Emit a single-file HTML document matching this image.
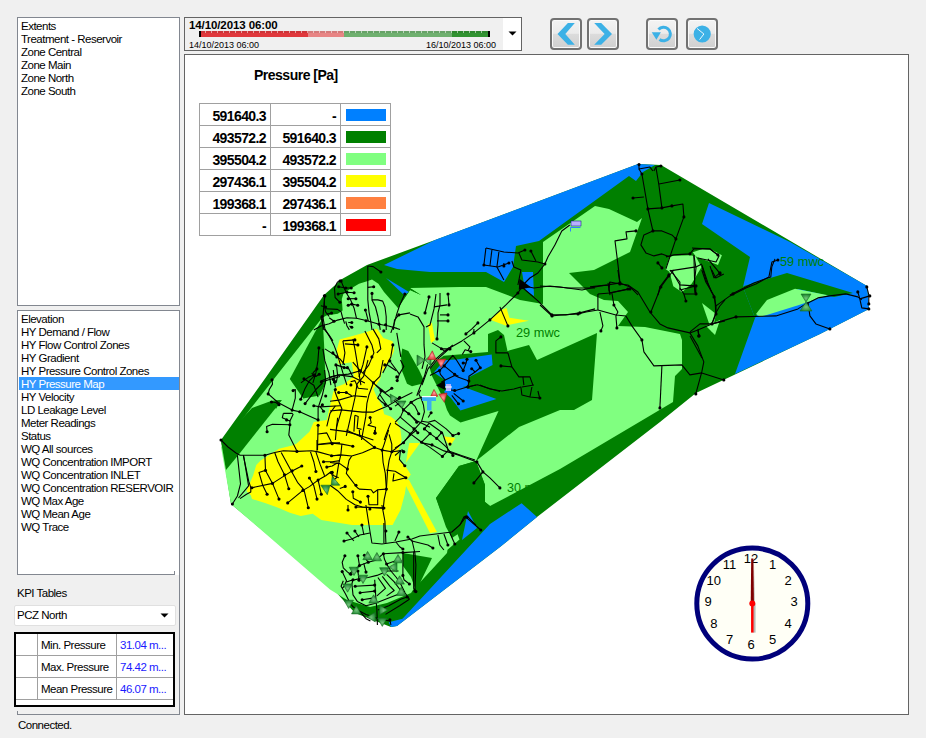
<!DOCTYPE html>
<html><head><meta charset="utf-8">
<style>
*{margin:0;padding:0;box-sizing:border-box}
html,body{width:926px;height:738px;overflow:hidden;background:#f0f0f0;font-family:"Liberation Sans",sans-serif;font-size:11px;color:#000}
.abs{position:absolute}
.lb{position:absolute;background:#fff;border:1px solid #828790}
.it{position:absolute;left:3px;height:13px;line-height:14px;white-space:nowrap;letter-spacing:-0.5px;font-size:11.5px}
.sel{background:#3399ff;color:#fff}
.btn{position:absolute;top:18px;width:32px;height:32px;border:2px solid #727272;border-radius:4px;background:linear-gradient(#f3f3f3 0,#ebebeb 48%,#dcdcdc 49%,#d0d0d0 100%);box-shadow:inset 0 0 0 1px #fafafa}
.btn svg{position:absolute;left:0;top:0}
.t{position:absolute;white-space:nowrap}
</style></head><body>
<!-- listbox 1 -->
<div class="lb" style="left:17px;top:17px;width:163px;height:289px">
 <div class="it" style="top:1px">Extents</div>
 <div class="it" style="top:14px">Treatment - Reservoir</div>
 <div class="it" style="top:27px">Zone Central</div>
 <div class="it" style="top:40px">Zone Main</div>
 <div class="it" style="top:53px">Zone North</div>
 <div class="it" style="top:66px">Zone South</div>
</div>
<!-- listbox 2 -->
<div class="lb" style="left:17px;top:310px;width:163px;height:265px;border-bottom:none">
 <div class="it" style="top:1px">Elevation</div>
 <div class="it" style="top:14px">HY Demand / Flow</div>
 <div class="it" style="top:27px">HY Flow Control Zones</div>
 <div class="it" style="top:40px">HY Gradient</div>
 <div class="it" style="top:53px">HY Pressure Control Zones</div>
 <div class="it sel" style="top:66px;left:1px;width:160px;padding-left:2px">HY Pressure Map</div>
 <div class="it" style="top:79px">HY Velocity</div>
 <div class="it" style="top:92px">LD Leakage Level</div>
 <div class="it" style="top:105px">Meter Readings</div>
 <div class="it" style="top:118px">Status</div>
 <div class="it" style="top:131px">WQ All sources</div>
 <div class="it" style="top:144px">WQ Concentration IMPORT</div>
 <div class="it" style="top:157px">WQ Concentration INLET</div>
 <div class="it" style="top:170px">WQ Concentration RESERVOIR</div>
 <div class="it" style="top:183px">WQ Max Age</div>
 <div class="it" style="top:196px">WQ Mean Age</div>
 <div class="it" style="top:209px">WQ Trace</div>
</div>
<div class="abs" style="left:17px;top:574px;width:158px;height:1px;background:#828790"></div>
<div class="abs" style="left:174px;top:571px;width:1px;height:4px;background:#828790"></div>
<div class="abs" style="left:179px;top:574px;width:1px;height:141px;background:#828790"></div>
<div class="abs" style="left:17px;top:714px;width:163px;height:1px;background:#828790"></div>
<div class="abs" style="left:17px;top:711px;width:1px;height:4px;background:#828790"></div>
<div class="t" style="left:17px;top:587px;letter-spacing:-0.5px;font-size:11.5px">KPI Tables</div>
<!-- combo -->
<div class="abs" style="left:14px;top:605px;width:162px;height:21px;background:#fff;border:1px solid #e0e0e0;border-radius:2px"></div>
<div class="t" style="left:17px;top:608.5px;letter-spacing:-0.5px;font-size:11.5px">PCZ North</div>
<svg class="abs" style="left:160px;top:613px" width="10" height="6"><path d="M0.5 0.5h8l-4 4z" fill="#000"/></svg>
<!-- kpi table -->
<div class="abs" style="left:14px;top:632px;width:161px;height:75px;border:2px solid #000;background:#fff"></div>
<div class="abs" style="left:16px;top:655px;width:157px;height:1px;background:#a0a0a0"></div>
<div class="abs" style="left:16px;top:677px;width:157px;height:1px;background:#a0a0a0"></div>
<div class="abs" style="left:16px;top:699px;width:157px;height:1px;background:#a0a0a0"></div>
<div class="abs" style="left:37px;top:634px;width:1px;height:66px;background:#a0a0a0"></div>
<div class="abs" style="left:116px;top:634px;width:1px;height:66px;background:#a0a0a0"></div>
<div class="t" style="left:41px;top:639px;letter-spacing:-0.5px;font-size:11.5px">Min. Pressure</div>
<div class="t" style="left:41px;top:661px;letter-spacing:-0.5px;font-size:11.5px">Max. Pressure</div>
<div class="t" style="left:41px;top:683px;letter-spacing:-0.5px;font-size:11.5px">Mean Pressure</div>
<div class="t" style="left:120px;top:639px;letter-spacing:-0.5px;font-size:11.5px;color:#1a1aff">31.04 m...</div>
<div class="t" style="left:120px;top:661px;letter-spacing:-0.5px;font-size:11.5px;color:#1a1aff">74.42 m...</div>
<div class="t" style="left:120px;top:683px;letter-spacing:-0.5px;font-size:11.5px;color:#1a1aff">46.07 m...</div>
<div class="t" style="left:18px;top:718.5px;letter-spacing:-0.5px;font-size:11.5px">Connected.</div>

<!-- time slider -->
<div class="abs" style="left:184px;top:17px;width:338px;height:34px;border:1px solid #646464;background:#f0f0f0"></div>
<div class="abs" style="left:503px;top:18px;width:18px;height:32px;background:#fff"></div>
<svg class="abs" style="left:508px;top:31px" width="10" height="6"><path d="M0.5 0.5h8l-4 4z" fill="#000"/></svg>
<div class="t" style="left:189px;top:19px;font-weight:bold;font-size:11.5px;letter-spacing:-0.1px">14/10/2013 06:00</div>
<div class="t" style="left:189px;top:39.5px;font-size:9px">14/10/2013 06:00</div>
<div class="t" style="left:426px;top:39.5px;font-size:9px">16/10/2013 06:00</div>
<svg class="abs" style="left:199px;top:31px" width="291" height="6">
 <rect x="0" y="0" width="2" height="6" fill="#000"/>
 <rect x="2" y="0" width="107" height="6" fill="#e0383c"/>
 <rect x="109" y="0" width="36" height="6" fill="#e88585"/>
 <rect x="145" y="0" width="108" height="6" fill="#6fb06f"/>
 <rect x="253" y="0" width="36" height="6" fill="#319331"/>
 <rect x="289" y="0" width="2" height="6" fill="#000"/>
 <rect x="2" y="0" width="287" height="2" fill="#000" opacity="0.08"/>
<rect x="6" y="0" width="1" height="2" fill="#fff" opacity="0.55"/><rect x="12" y="0" width="1" height="2" fill="#fff" opacity="0.55"/><rect x="18" y="0" width="1" height="2" fill="#fff" opacity="0.55"/><rect x="24" y="0" width="1" height="2" fill="#fff" opacity="0.55"/><rect x="30" y="0" width="1" height="2" fill="#fff" opacity="0.55"/><rect x="36" y="0" width="1" height="2" fill="#fff" opacity="0.55"/><rect x="42" y="0" width="1" height="2" fill="#fff" opacity="0.55"/><rect x="48" y="0" width="1" height="2" fill="#fff" opacity="0.55"/><rect x="54" y="0" width="1" height="2" fill="#fff" opacity="0.55"/><rect x="60" y="0" width="1" height="2" fill="#fff" opacity="0.55"/><rect x="66" y="0" width="1" height="2" fill="#fff" opacity="0.55"/><rect x="72" y="0" width="1" height="2" fill="#fff" opacity="0.55"/><rect x="78" y="0" width="1" height="2" fill="#fff" opacity="0.55"/><rect x="84" y="0" width="1" height="2" fill="#fff" opacity="0.55"/><rect x="90" y="0" width="1" height="2" fill="#fff" opacity="0.55"/><rect x="96" y="0" width="1" height="2" fill="#fff" opacity="0.55"/><rect x="102" y="0" width="1" height="2" fill="#fff" opacity="0.55"/><rect x="108" y="0" width="1" height="2" fill="#fff" opacity="0.55"/><rect x="114" y="0" width="1" height="2" fill="#fff" opacity="0.55"/><rect x="120" y="0" width="1" height="2" fill="#fff" opacity="0.55"/><rect x="126" y="0" width="1" height="2" fill="#fff" opacity="0.55"/><rect x="132" y="0" width="1" height="2" fill="#fff" opacity="0.55"/><rect x="138" y="0" width="1" height="2" fill="#fff" opacity="0.55"/><rect x="144" y="0" width="1" height="2" fill="#fff" opacity="0.55"/><rect x="150" y="0" width="1" height="2" fill="#fff" opacity="0.55"/><rect x="156" y="0" width="1" height="2" fill="#fff" opacity="0.55"/><rect x="162" y="0" width="1" height="2" fill="#fff" opacity="0.55"/><rect x="168" y="0" width="1" height="2" fill="#fff" opacity="0.55"/><rect x="174" y="0" width="1" height="2" fill="#fff" opacity="0.55"/><rect x="180" y="0" width="1" height="2" fill="#fff" opacity="0.55"/><rect x="186" y="0" width="1" height="2" fill="#fff" opacity="0.55"/><rect x="192" y="0" width="1" height="2" fill="#fff" opacity="0.55"/><rect x="198" y="0" width="1" height="2" fill="#fff" opacity="0.55"/><rect x="204" y="0" width="1" height="2" fill="#fff" opacity="0.55"/><rect x="210" y="0" width="1" height="2" fill="#fff" opacity="0.55"/><rect x="216" y="0" width="1" height="2" fill="#fff" opacity="0.55"/><rect x="222" y="0" width="1" height="2" fill="#fff" opacity="0.55"/><rect x="228" y="0" width="1" height="2" fill="#fff" opacity="0.55"/><rect x="234" y="0" width="1" height="2" fill="#fff" opacity="0.55"/><rect x="240" y="0" width="1" height="2" fill="#fff" opacity="0.55"/><rect x="246" y="0" width="1" height="2" fill="#fff" opacity="0.55"/><rect x="252" y="0" width="1" height="2" fill="#fff" opacity="0.55"/><rect x="258" y="0" width="1" height="2" fill="#fff" opacity="0.55"/><rect x="264" y="0" width="1" height="2" fill="#fff" opacity="0.55"/><rect x="270" y="0" width="1" height="2" fill="#fff" opacity="0.55"/><rect x="276" y="0" width="1" height="2" fill="#fff" opacity="0.55"/><rect x="282" y="0" width="1" height="2" fill="#fff" opacity="0.55"/>
</svg>

<!-- buttons -->
<div class="btn" style="left:550px"><svg width="28" height="28"><path d="M22.8 3 L15.9 3 L5.5 14 L15.9 24.8 L22.8 24.8 L13.3 14Z" fill="#3cb1e6"/></svg></div>
<div class="btn" style="left:587px"><svg width="28" height="28"><path d="M5.2 3 L12.2 3 L23 14 L12.2 24.8 L5.2 24.8 L15.6 14Z" fill="#3cb1e6"/></svg></div>
<div class="btn" style="left:646px"><svg width="28" height="28"><path d="M10.5 9.5 A6.8 6.8 0 1 1 11.5 19.5" fill="none" stroke="#3cb1e6" stroke-width="3"/><path d="M3.7 12.3 L12.9 12.3 L8.4 19.8Z" fill="#3cb1e6"/></svg></div>
<div class="btn" style="left:686px"><svg width="28" height="28"><circle cx="14.2" cy="14" r="8.6" fill="#3cb1e6"/><path d="M9 8.4 L15.9 14 L11.6 19.6" fill="none" stroke="#fff" stroke-width="0.9"/></svg></div>

<!-- map panel -->
<div class="abs" style="left:184px;top:54px;width:725px;height:661px;border:1px solid #646464;background:#fff;overflow:hidden">
<svg class="abs" style="left:-185px;top:-55px" width="926" height="738" id="map">
<polygon points="638,164 661,165 867,286 869,309 820,334 696,393 660,422 537,517 500,547 397,626 391,627 355,613 334,590 231,504 221,440 264,380 324,295 342,279 367,265 435,240" fill="#008000"/>
<polygon points="221,447 251,408 322,318 326.4,315.4 337.8,313.8 342.6,310.5 341.8,299 343.5,293.5 351,288.6 359,283.7 367,281.3 372,279.6 378.4,283.7 384,292 398,308 410,290 421,295 410,288 460,287 486,287 502,293 520,300 543,304 543,242 595,206 609,209 637,222 642,218 630,252 594,270 569,273 590,294 597,297 604,300 618,301 628,312 618,326 645,327 680,334 682,340 682,369 675,376 673,402 641,421 560,469 490,506 485,502 485,485 476,461 459,466 436,498 440.5,510 454.4,525.5 459.5,539.4 447.5,549.7 447,553 413,590 411,593 387,603 370,607 347,600 330,589.5 231,504" fill="#80ff80"/>
<polygon points="221,441 252,408 271,401 282,400 240,453 226,470" fill="#008000"/>
<polygon points="322.6,317.9 289.8,379 303.2,398.4 319.6,395.4 325.6,383.5 324.1,344.7" fill="#008000"/>
<polygon points="384,276 398,308 410,290 421,295 408,287" fill="#008000"/>
<polygon points="488,334 498,330 504,335 507.5,351 529,345 537,360 597,333 592,400 574,410 560,410 519,427 476,461 498.5,411 460.5,422.5 450,415.5 447,410 443,398 432,376 430,369 438.8,359.4 443.7,355.7 488,352" fill="#008000"/>
<polygon points="402.2,348.4 408.3,350.9 419.3,370.4 424.1,381.3 421.7,383.8 412,386.2 407,383.8 402.2,371.6 401,357" fill="#008000"/>
<polygon points="436,498 459,466 476,461 485,485 485,502 490,506 464,530 452,538 446,527" fill="#008000"/>
<polygon points="403,553 432,558 416,591.5 411,577 403,566" fill="#008000"/>
<polygon points="272,401 281,400 276,409" fill="#008000"/>
<polygon points="673.3,255.7 689.8,255.2 695.6,256.2 701.5,267 691.8,283.5 682,292.2 673.3,286.3 669.4,271.8 665.5,268.9 669.4,257.2" fill="#80ff80"/>
<polygon points="692.8,252.3 702.5,249 711.2,249.4 721.9,255.2 718,265 710.3,262 699.6,258.2 695.6,256.2" fill="#80ff80"/>
<polygon points="702,303 716,314 712,332" fill="#80ff80"/>
<polygon points="706,326 715,335 720,320" fill="#80ff80"/>
<polygon points="384,265 435,240 638,164 655,165 643,172 636,181 629,176 539,241 516,246 513,267 504,282 486,272 430,272 397,269" fill="#0080ff"/>
<polygon points="386,278 404,295 409,292" fill="#0080ff"/>
<polygon points="468,511 477,528 462,540" fill="#0080ff"/>
<polygon points="522,272 533,272 534,296 525,290" fill="#0080ff"/>
<polygon points="709,203 790,242 867,286 869,309 820,334 735,374 755,318 743,287 750,257 702,224" fill="#0080ff"/>
<polygon points="537,517 500,547 397,626 391,627 388.7,622.3 402.5,618.8 490,524 521.6,503.2" fill="#0080ff"/>
<polygon points="433.8,372.5 444.2,360.2 458.5,359.2 491.7,354.5 492.6,364.9 468.9,377.3 464.2,384.8 449,382 442.3,378.2" fill="#0080ff"/>
<polygon points="447,387.7 463.2,386.7 496.4,399.1 460.4,410.5 450.9,398.1 444,392" fill="#0080ff"/>
<polygon points="444.2,378.2 468.9,377.3 468,385.8 447,390.5 444.2,384.8" fill="#0080ff"/>
<polygon points="744,286 787,273 853,293 834,297 798,289 759,312 755,318 743,287" fill="#008000"/>
<polygon points="756,314 767,300 795,288.7 828,295.3 799,305 760,317" fill="#80ff80"/>
<polygon points="339.7,339.6 361.5,333.4 377,328.7 383.3,338 392.6,341.2 394.2,350.5 389.5,361.4 382.1,371.9 379.9,379.5 373.4,389.3 377.7,399 382.1,405.6 384.2,414.2 390.7,416.4 397.2,421.8 400.5,430 401.6,439.8 398.3,451.7 399.4,460.4 405.9,466.9 410.8,474.5 407,479.9 404.8,494 400.5,510 392.6,525 352.1,525 321.3,520 312.7,513.8 300.7,516 289.9,512.7 276.9,507.2 265,502.9 252,499 250.8,495.3 246.5,491 253,475.8 256.3,465 260.6,460.6 272.5,453 279,448.7 292,445.4 296.4,443.8 309.4,431.8 313.8,422 326.8,419.9 333.3,391.7 336.5,387.1 344.1,383.9 353.9,376.3 351.7,362.2 338.7,364.3 336.6,350.5" fill="#ffff00"/>
<polygon points="409.2,443 420,443 406,462.5" fill="#ffff00"/>
<polygon points="443.2,436.3 455.3,438 450,446.6" fill="#ffff00"/>
<polygon points="428,324 432,323 435,340 431,343" fill="#ffff00"/>
<polygon points="403,480 409,480 437,532 430,533" fill="#ffff00"/>
<polygon points="490,319.7 501.6,310 506.5,308 509.4,317.8 528.9,320.7 505.5,325.6" fill="#ffff00"/>
<polyline points="324.9,295.9 323.9,304.9 322.9,316.9 324.9,328.9 330.9,338.9 333.9,344.9 336.9,352.9 339.9,362.9 342.9,372.9 346.9,385.1" fill="none" stroke="#000" stroke-width="1.1" stroke-linejoin="round"/>
<polyline points="320.9,316.9 323.9,328.9 328.9,334.9 332.9,340.9" fill="none" stroke="#000" stroke-width="1.1" stroke-linejoin="round"/>
<polyline points="322.9,348.9 324.9,360.9 328.9,372.9 330.9,385.1" fill="none" stroke="#000" stroke-width="1.1" stroke-linejoin="round"/>
<polyline points="318.9,347.9 317.9,360.9 315.9,372.9 312.9,382.9" fill="none" stroke="#000" stroke-width="1.1" stroke-linejoin="round"/>
<polyline points="342.9,340.9 344.9,352.9 342.9,364.9" fill="none" stroke="#000" stroke-width="1.1" stroke-linejoin="round"/>
<polyline points="342.9,340.9 354.9,339.9" fill="none" stroke="#000" stroke-width="1.1" stroke-linejoin="round"/>
<polyline points="344.9,343.9 357.9,344.9" fill="none" stroke="#000" stroke-width="1.1" stroke-linejoin="round"/>
<polyline points="352.9,338.9 354.9,348.9 356.9,360.9 358.9,372.9 360.9,385.1" fill="none" stroke="#000" stroke-width="1.1" stroke-linejoin="round"/>
<polyline points="364.9,330.9 371.9,344.9 373.9,352.9 368.9,364.9 362.9,372.9" fill="none" stroke="#000" stroke-width="1.1" stroke-linejoin="round"/>
<polyline points="372.9,328.9 378.8,338.9 380.8,348.9 376.8,352.9" fill="none" stroke="#000" stroke-width="1.1" stroke-linejoin="round"/>
<polyline points="366.9,346.9 362.9,364.9 358.9,376.9" fill="none" stroke="#000" stroke-width="1.1" stroke-linejoin="round"/>
<polyline points="392.8,344.9 390.8,356.9 386.8,364.9 382.8,372.9" fill="none" stroke="#000" stroke-width="1.1" stroke-linejoin="round"/>
<polyline points="396.8,332.9 398.8,344.9 400.8,356.9" fill="none" stroke="#000" stroke-width="1.1" stroke-linejoin="round"/>
<polyline points="324.9,348.9 332.9,353.9 339.9,358.9 344.9,364.9" fill="none" stroke="#000" stroke-width="1.1" stroke-linejoin="round"/>
<polyline points="332.9,352.9 336.9,356.9" fill="none" stroke="#000" stroke-width="1.1" stroke-linejoin="round"/>
<polyline points="335.9,364.9 348.9,368.9 352.9,376.9" fill="none" stroke="#000" stroke-width="1.1" stroke-linejoin="round"/>
<polyline points="320.9,380.9 330.9,376.9 338.9,374.9 352.9,376.9 364.9,382.9" fill="none" stroke="#000" stroke-width="1.1" stroke-linejoin="round"/>
<polyline points="300.9,382.9 308.9,376.9 313.9,374.9" fill="none" stroke="#000" stroke-width="1.1" stroke-linejoin="round"/>
<polyline points="312.9,372.9 316.9,368.9" fill="none" stroke="#000" stroke-width="1.1" stroke-linejoin="round"/>
<polyline points="404.8,294.0 399.8,304.9 396.8,313.9 393.8,324.9 390.8,332.9" fill="none" stroke="#000" stroke-width="1.1" stroke-linejoin="round"/>
<polyline points="398.8,314.9 410.0,312.9" fill="none" stroke="#000" stroke-width="1.1" stroke-linejoin="round"/>
<circle cx="324.9" cy="295.9" r="1.55" fill="#000"/>
<circle cx="318.9" cy="347.9" r="1.55" fill="#000"/>
<circle cx="354.9" cy="339.9" r="1.55" fill="#000"/>
<circle cx="357.9" cy="344.9" r="1.55" fill="#000"/>
<circle cx="366.9" cy="346.9" r="1.55" fill="#000"/>
<circle cx="392.8" cy="344.9" r="1.55" fill="#000"/>
<circle cx="332.9" cy="352.9" r="1.55" fill="#000"/>
<circle cx="336.9" cy="356.9" r="1.55" fill="#000"/>
<circle cx="335.9" cy="364.9" r="1.55" fill="#000"/>
<circle cx="313.9" cy="374.9" r="1.55" fill="#000"/>
<circle cx="316.9" cy="368.9" r="1.55" fill="#000"/>
<circle cx="404.8" cy="294.0" r="1.55" fill="#000"/>
<circle cx="339.9" cy="281.0" r="1.55" fill="#000"/>
<circle cx="383.8" cy="330.9" r="1.55" fill="#000"/>
<circle cx="398.8" cy="314.9" r="1.55" fill="#000"/>
<circle cx="371.9" cy="356.9" r="1.55" fill="#000"/>
<circle cx="389.8" cy="360.9" r="1.55" fill="#000"/>
<circle cx="384.8" cy="364.9" r="1.55" fill="#000"/>
<circle cx="396.8" cy="376.9" r="1.55" fill="#000"/>
<circle cx="350.9" cy="384.9" r="1.55" fill="#000"/>
<polyline points="485.9,248.0 483.9,265.0" fill="none" stroke="#000" stroke-width="1.1" stroke-linejoin="round"/>
<polyline points="485.9,248.0 503.9,252.0 517.9,253.0 524.9,250.0" fill="none" stroke="#000" stroke-width="1.1" stroke-linejoin="round"/>
<polyline points="491.9,250.0 489.9,266.0" fill="none" stroke="#000" stroke-width="1.1" stroke-linejoin="round"/>
<polyline points="498.9,252.0 496.9,267.0 503.9,280.0" fill="none" stroke="#000" stroke-width="1.1" stroke-linejoin="round"/>
<polyline points="483.9,265.0 497.9,267.0 508.9,263.0" fill="none" stroke="#000" stroke-width="1.1" stroke-linejoin="round"/>
<polyline points="503.9,263.0 503.9,266.0" fill="none" stroke="#000" stroke-width="1.1" stroke-linejoin="round"/>
<polyline points="518.9,253.0 521.9,260.0 537.9,262.0 544.9,264.0" fill="none" stroke="#000" stroke-width="1.1" stroke-linejoin="round"/>
<polyline points="530.9,251.0 535.9,261.0" fill="none" stroke="#000" stroke-width="1.1" stroke-linejoin="round"/>
<polyline points="511.9,261.0 513.9,267.0 520.9,270.0 517.9,285.0" fill="none" stroke="#000" stroke-width="1.1" stroke-linejoin="round"/>
<polyline points="554.9,245.0 547.9,257.0 544.9,264.0 537.9,273.0 529.9,278.0 523.9,284.0 517.9,293.0" fill="none" stroke="#000" stroke-width="1.1" stroke-linejoin="round"/>
<polyline points="554.9,245.0 561.8,231.0 569.8,225.0" fill="none" stroke="#000" stroke-width="1.1" stroke-linejoin="round"/>
<polyline points="517.9,293.0 505.9,304.9 489.9,319.9 473.9,332.9 461.9,340.9 446.0,349.9 436.0,358.9 428.0,368.9 422.0,385.1" fill="none" stroke="#000" stroke-width="1.1" stroke-linejoin="round"/>
<polyline points="523.9,286.0 533.9,288.0 549.9,286.0 567.8,288.0 595.0,288.0" fill="none" stroke="#000" stroke-width="1.1" stroke-linejoin="round"/>
<polyline points="521.9,287.0 537.9,300.9 551.9,314.9 565.8,314.9 579.8,312.9 595.0,308.9" fill="none" stroke="#000" stroke-width="1.1" stroke-linejoin="round"/>
<polyline points="499.9,306.9 507.9,325.9" fill="none" stroke="#000" stroke-width="1.1" stroke-linejoin="round"/>
<polyline points="477.9,322.9 471.9,328.9 465.9,333.9" fill="none" stroke="#000" stroke-width="1.1" stroke-linejoin="round"/>
<polyline points="473.9,328.9 473.9,332.9" fill="none" stroke="#000" stroke-width="1.1" stroke-linejoin="round"/>
<polyline points="463.9,340.9 469.9,346.9 467.9,350.9" fill="none" stroke="#000" stroke-width="1.1" stroke-linejoin="round"/>
<polyline points="436.0,294.0 434.0,308.9 430.0,324.9 426.0,326.9" fill="none" stroke="#000" stroke-width="1.1" stroke-linejoin="round"/>
<polyline points="448.0,294.0 449.0,304.9" fill="none" stroke="#000" stroke-width="1.1" stroke-linejoin="round"/>
<polyline points="440.0,293.0 440.0,304.9 438.0,312.9 438.0,324.9 437.0,338.9" fill="none" stroke="#000" stroke-width="1.1" stroke-linejoin="round"/>
<polyline points="429.0,296.9 427.0,304.9 425.0,312.9" fill="none" stroke="#000" stroke-width="1.1" stroke-linejoin="round"/>
<polyline points="434.0,306.9 447.0,304.9" fill="none" stroke="#000" stroke-width="1.1" stroke-linejoin="round"/>
<polyline points="440.0,314.9 448.0,314.9" fill="none" stroke="#000" stroke-width="1.1" stroke-linejoin="round"/>
<polyline points="437.0,320.9 448.0,320.9" fill="none" stroke="#000" stroke-width="1.1" stroke-linejoin="round"/>
<polyline points="410.0,313.9 418.0,316.9 424.0,326.9 424.0,344.9 425.0,356.9 422.0,368.9" fill="none" stroke="#000" stroke-width="1.1" stroke-linejoin="round"/>
<polyline points="432.0,342.9 442.0,348.9 450.0,348.9" fill="none" stroke="#000" stroke-width="1.1" stroke-linejoin="round"/>
<polyline points="500.9,336.9 495.9,340.9 495.9,352.9 507.9,352.9 511.9,366.9 518.9,376.9 529.9,376.9 532.9,385.1" fill="none" stroke="#000" stroke-width="1.1" stroke-linejoin="round"/>
<polyline points="500.9,365.9 511.9,366.9" fill="none" stroke="#000" stroke-width="1.1" stroke-linejoin="round"/>
<polyline points="522.9,376.9 523.9,385.1" fill="none" stroke="#000" stroke-width="1.1" stroke-linejoin="round"/>
<circle cx="483.9" cy="265.0" r="1.55" fill="#000"/>
<circle cx="524.9" cy="250.0" r="1.55" fill="#000"/>
<circle cx="508.9" cy="263.0" r="1.55" fill="#000"/>
<circle cx="503.9" cy="266.0" r="1.55" fill="#000"/>
<circle cx="544.9" cy="264.0" r="1.55" fill="#000"/>
<circle cx="530.9" cy="251.0" r="1.55" fill="#000"/>
<circle cx="517.9" cy="293.0" r="1.55" fill="#000"/>
<circle cx="551.9" cy="314.9" r="1.55" fill="#000"/>
<circle cx="507.9" cy="325.9" r="1.55" fill="#000"/>
<circle cx="477.9" cy="322.9" r="1.55" fill="#000"/>
<circle cx="465.9" cy="333.9" r="1.55" fill="#000"/>
<circle cx="473.9" cy="332.9" r="1.55" fill="#000"/>
<circle cx="448.0" cy="294.0" r="1.55" fill="#000"/>
<circle cx="449.0" cy="304.9" r="1.55" fill="#000"/>
<circle cx="437.0" cy="338.9" r="1.55" fill="#000"/>
<circle cx="429.0" cy="296.9" r="1.55" fill="#000"/>
<circle cx="425.0" cy="312.9" r="1.55" fill="#000"/>
<circle cx="448.0" cy="314.9" r="1.55" fill="#000"/>
<circle cx="448.0" cy="320.9" r="1.55" fill="#000"/>
<circle cx="450.0" cy="348.9" r="1.55" fill="#000"/>
<circle cx="500.9" cy="336.9" r="1.55" fill="#000"/>
<circle cx="500.9" cy="365.9" r="1.55" fill="#000"/>
<circle cx="579.8" cy="312.9" r="1.55" fill="#000"/>
<circle cx="489.9" cy="319.9" r="1.55" fill="#000"/>
<polyline points="240.0,455.2 264.9,455.2 274.7,452.5 283.4,450.8 297.5,451.4 311.6,450.8 318.1,451.9 332.2,455.7 340.0,455.2" fill="none" stroke="#000" stroke-width="1.1" stroke-linejoin="round"/>
<polyline points="243.3,455.2 248.7,481.2 250.8,487.7 250.8,492.1 246.5,494.2 240.0,498.6" fill="none" stroke="#000" stroke-width="1.1" stroke-linejoin="round"/>
<polyline points="264.9,455.2 265.5,470.4 272.5,483.4 279.0,499.1" fill="none" stroke="#000" stroke-width="1.1" stroke-linejoin="round"/>
<polyline points="264.9,470.4 259.0,472.5 262.8,485.6 267.1,494.2" fill="none" stroke="#000" stroke-width="1.1" stroke-linejoin="round"/>
<polyline points="251.9,487.7 272.5,483.4 292.1,470.9 301.8,466.0" fill="none" stroke="#000" stroke-width="1.1" stroke-linejoin="round"/>
<polyline points="274.7,452.5 278.0,461.7 284.5,474.7 288.8,488.8" fill="none" stroke="#000" stroke-width="1.1" stroke-linejoin="round"/>
<polyline points="281.2,452.5 291.0,470.4 297.5,482.3 304.0,489.9 308.3,507.8" fill="none" stroke="#000" stroke-width="1.1" stroke-linejoin="round"/>
<polyline points="287.7,502.9 302.9,490.4 309.4,486.6 318.1,480.1 325.7,475.8 330.0,472.5" fill="none" stroke="#000" stroke-width="1.1" stroke-linejoin="round"/>
<polyline points="310.5,451.9 313.8,461.7 315.9,471.5" fill="none" stroke="#000" stroke-width="1.1" stroke-linejoin="round"/>
<polyline points="315.9,451.9 320.3,464.9 324.6,475.8" fill="none" stroke="#000" stroke-width="1.1" stroke-linejoin="round"/>
<polyline points="309.4,478.0 313.8,485.6 317.0,499.1" fill="none" stroke="#000" stroke-width="1.1" stroke-linejoin="round"/>
<polyline points="318.1,480.1 321.3,494.2" fill="none" stroke="#000" stroke-width="1.1" stroke-linejoin="round"/>
<polyline points="317.0,440.0 317.0,450.8" fill="none" stroke="#000" stroke-width="1.1" stroke-linejoin="round"/>
<polyline points="318.1,444.3 331.1,442.7 340.0,443.3" fill="none" stroke="#000" stroke-width="1.1" stroke-linejoin="round"/>
<polyline points="323.5,461.7 332.2,461.7 340.0,460.6" fill="none" stroke="#000" stroke-width="1.1" stroke-linejoin="round"/>
<polyline points="326.8,467.1 332.2,466.0 337.6,462.8" fill="none" stroke="#000" stroke-width="1.1" stroke-linejoin="round"/>
<polyline points="331.1,472.5 335.4,483.4" fill="none" stroke="#000" stroke-width="1.1" stroke-linejoin="round"/>
<circle cx="279.0" cy="499.1" r="1.55" fill="#000"/>
<circle cx="267.1" cy="494.2" r="1.55" fill="#000"/>
<circle cx="301.8" cy="466.0" r="1.55" fill="#000"/>
<circle cx="288.8" cy="488.8" r="1.55" fill="#000"/>
<circle cx="308.3" cy="507.8" r="1.55" fill="#000"/>
<circle cx="287.7" cy="502.9" r="1.55" fill="#000"/>
<circle cx="315.9" cy="471.5" r="1.55" fill="#000"/>
<circle cx="317.0" cy="499.1" r="1.55" fill="#000"/>
<circle cx="321.3" cy="494.2" r="1.55" fill="#000"/>
<circle cx="323.5" cy="461.7" r="1.55" fill="#000"/>
<circle cx="326.8" cy="467.1" r="1.55" fill="#000"/>
<circle cx="331.1" cy="472.5" r="1.55" fill="#000"/>
<circle cx="264.9" cy="455.2" r="1.55" fill="#000"/>
<circle cx="296.9" cy="451.4" r="1.55" fill="#000"/>
<circle cx="331.6" cy="455.7" r="1.55" fill="#000"/>
<circle cx="251.9" cy="487.7" r="1.55" fill="#000"/>
<circle cx="272.5" cy="483.4" r="1.55" fill="#000"/>
<circle cx="292.1" cy="470.9" r="1.55" fill="#000"/>
<circle cx="284.5" cy="474.7" r="1.55" fill="#000"/>
<circle cx="302.9" cy="490.4" r="1.55" fill="#000"/>
<circle cx="318.1" cy="480.1" r="1.55" fill="#000"/>
<circle cx="309.4" cy="478.0" r="1.55" fill="#000"/>
<circle cx="265.5" cy="470.4" r="1.55" fill="#000"/>
<polyline points="330.0,456.0 340.8,454.9 351.7,456.0 362.5,452.8 374.5,447.4 382.1,450.1 391.8,451.7 403.8,441.9 412.4,433.3 416.8,430.0" fill="none" stroke="#000" stroke-width="1.1" stroke-linejoin="round"/>
<polyline points="346.3,430.0 360.4,436.5 374.5,447.4" fill="none" stroke="#000" stroke-width="1.1" stroke-linejoin="round"/>
<polyline points="359.3,430.0 359.8,436.5" fill="none" stroke="#000" stroke-width="1.1" stroke-linejoin="round"/>
<polyline points="374.5,430.0 375.0,433.3" fill="none" stroke="#000" stroke-width="1.1" stroke-linejoin="round"/>
<polyline points="330.0,443.0 341.9,444.1 352.8,446.3" fill="none" stroke="#000" stroke-width="1.1" stroke-linejoin="round"/>
<polyline points="341.9,444.1 340.8,454.9 338.7,463.6 336.5,477.7 332.2,481.0" fill="none" stroke="#000" stroke-width="1.1" stroke-linejoin="round"/>
<polyline points="330.0,462.5 339.8,463.6 347.4,469.0 346.3,473.4 357.1,487.5 359.3,489.1 371.2,489.7 373.4,492.9 377.7,489.7 386.4,489.1" fill="none" stroke="#000" stroke-width="1.1" stroke-linejoin="round"/>
<polyline points="351.7,456.0 349.0,460.4 347.4,469.0" fill="none" stroke="#000" stroke-width="1.1" stroke-linejoin="round"/>
<polyline points="388.6,430.0 384.2,444.1 382.1,450.1 383.1,462.5 385.3,473.4 386.4,489.1 384.2,499.4 383.1,510.0" fill="none" stroke="#000" stroke-width="1.1" stroke-linejoin="round"/>
<polyline points="389.1,434.3 391.8,444.1 391.8,451.7 389.1,460.4 387.5,471.2 386.4,489.1" fill="none" stroke="#000" stroke-width="1.1" stroke-linejoin="round"/>
<polyline points="386.4,470.1 395.1,471.2 405.9,477.7 392.9,481.0 394.0,473.4" fill="none" stroke="#000" stroke-width="1.1" stroke-linejoin="round"/>
<polyline points="392.9,451.7 400.5,450.6 399.4,459.3 404.8,465.8" fill="none" stroke="#000" stroke-width="1.1" stroke-linejoin="round"/>
<polyline points="401.6,449.5 403.8,451.7" fill="none" stroke="#000" stroke-width="1.1" stroke-linejoin="round"/>
<polyline points="368.0,496.2 369.0,504.8 377.7,504.8 377.7,489.7" fill="none" stroke="#000" stroke-width="1.1" stroke-linejoin="round"/>
<polyline points="330.0,485.3 337.6,490.7 346.3,499.4 354.9,504.8 362.5,507.0 383.1,508.1" fill="none" stroke="#000" stroke-width="1.1" stroke-linejoin="round"/>
<polyline points="339.8,488.6 345.2,486.4" fill="none" stroke="#000" stroke-width="1.1" stroke-linejoin="round"/>
<polyline points="352.8,491.8 353.3,498.3 360.4,502.1" fill="none" stroke="#000" stroke-width="1.1" stroke-linejoin="round"/>
<polyline points="332.2,472.3 333.3,475.6 338.7,477.7" fill="none" stroke="#000" stroke-width="1.1" stroke-linejoin="round"/>
<circle cx="375.0" cy="433.3" r="1.55" fill="#000"/>
<circle cx="352.8" cy="446.3" r="1.55" fill="#000"/>
<circle cx="332.2" cy="472.3" r="1.55" fill="#000"/>
<circle cx="345.2" cy="486.4" r="1.55" fill="#000"/>
<circle cx="352.8" cy="491.8" r="1.55" fill="#000"/>
<circle cx="360.4" cy="502.1" r="1.55" fill="#000"/>
<circle cx="368.0" cy="496.2" r="1.55" fill="#000"/>
<circle cx="404.8" cy="465.8" r="1.55" fill="#000"/>
<circle cx="403.8" cy="451.7" r="1.55" fill="#000"/>
<circle cx="386.4" cy="489.1" r="1.55" fill="#000"/>
<circle cx="374.5" cy="447.4" r="1.55" fill="#000"/>
<circle cx="382.1" cy="450.1" r="1.55" fill="#000"/>
<circle cx="405.9" cy="477.7" r="1.55" fill="#000"/>
<circle cx="391.8" cy="451.7" r="1.55" fill="#000"/>
<circle cx="347.4" cy="469.0" r="1.55" fill="#000"/>
<circle cx="356.0" cy="485.3" r="1.55" fill="#000"/>
<polyline points="272.0,379.8 272.5,384.1 269.3,389.5 268.2,393.9 278.0,402.5 292.1,410.1 299.7,411.8 318.1,419.9" fill="none" stroke="#000" stroke-width="1.1" stroke-linejoin="round"/>
<polyline points="271.5,402.0 275.8,402.5 279.0,404.7" fill="none" stroke="#000" stroke-width="1.1" stroke-linejoin="round"/>
<polyline points="293.1,390.6 295.3,389.5 295.3,398.2 292.1,410.1" fill="none" stroke="#000" stroke-width="1.1" stroke-linejoin="round"/>
<polyline points="283.4,413.4 292.1,413.4 293.1,414.5 289.9,421.0 282.3,417.7 283.4,413.4" fill="none" stroke="#000" stroke-width="1.1" stroke-linejoin="round"/>
<polyline points="267.1,431.8 266.6,426.4 272.5,424.2 289.9,424.8 288.8,435.1 296.4,450.0" fill="none" stroke="#000" stroke-width="1.1" stroke-linejoin="round"/>
<polyline points="289.9,421.0 289.9,424.8" fill="none" stroke="#000" stroke-width="1.1" stroke-linejoin="round"/>
<polyline points="318.1,419.9 318.1,408.0 322.4,394.9 325.7,380.8 324.6,370.0" fill="none" stroke="#000" stroke-width="1.1" stroke-linejoin="round"/>
<polyline points="318.1,425.3 317.5,450.0" fill="none" stroke="#000" stroke-width="1.1" stroke-linejoin="round"/>
<polyline points="318.1,434.0 326.8,432.9 332.2,443.8" fill="none" stroke="#000" stroke-width="1.1" stroke-linejoin="round"/>
<polyline points="317.5,444.8 340.0,442.7" fill="none" stroke="#000" stroke-width="1.1" stroke-linejoin="round"/>
<polyline points="313.8,405.8 320.3,406.9 323.5,411.2" fill="none" stroke="#000" stroke-width="1.1" stroke-linejoin="round"/>
<polyline points="320.3,406.9 322.4,404.7" fill="none" stroke="#000" stroke-width="1.1" stroke-linejoin="round"/>
<polyline points="320.3,406.9 340.0,405.8" fill="none" stroke="#000" stroke-width="1.1" stroke-linejoin="round"/>
<polyline points="326.8,426.4 330.0,413.4 335.4,405.8" fill="none" stroke="#000" stroke-width="1.1" stroke-linejoin="round"/>
<polyline points="336.5,428.6 337.6,417.7" fill="none" stroke="#000" stroke-width="1.1" stroke-linejoin="round"/>
<polyline points="300.7,399.3 305.1,388.4 309.4,380.8 314.8,375.4" fill="none" stroke="#000" stroke-width="1.1" stroke-linejoin="round"/>
<polyline points="305.1,403.6 315.9,389.5 322.4,383.0" fill="none" stroke="#000" stroke-width="1.1" stroke-linejoin="round"/>
<polyline points="304.0,378.7 313.8,385.2 318.1,397.1" fill="none" stroke="#000" stroke-width="1.1" stroke-linejoin="round"/>
<polyline points="311.6,373.3 315.9,376.5 319.2,374.3" fill="none" stroke="#000" stroke-width="1.1" stroke-linejoin="round"/>
<polyline points="333.3,370.0 334.4,380.8 335.4,387.4" fill="none" stroke="#000" stroke-width="1.1" stroke-linejoin="round"/>
<polyline points="321.3,381.9 332.2,378.7 340.0,376.5" fill="none" stroke="#000" stroke-width="1.1" stroke-linejoin="round"/>
<circle cx="272.0" cy="379.8" r="1.55" fill="#000"/>
<circle cx="268.2" cy="393.9" r="1.55" fill="#000"/>
<circle cx="318.1" cy="419.9" r="1.55" fill="#000"/>
<circle cx="271.5" cy="402.0" r="1.55" fill="#000"/>
<circle cx="279.0" cy="404.7" r="1.55" fill="#000"/>
<circle cx="293.1" cy="390.6" r="1.55" fill="#000"/>
<circle cx="292.1" cy="410.1" r="1.55" fill="#000"/>
<circle cx="299.7" cy="411.8" r="1.55" fill="#000"/>
<circle cx="286.6" cy="419.9" r="1.55" fill="#000"/>
<circle cx="267.1" cy="431.8" r="1.55" fill="#000"/>
<circle cx="289.9" cy="424.8" r="1.55" fill="#000"/>
<circle cx="318.1" cy="425.3" r="1.55" fill="#000"/>
<circle cx="332.2" cy="443.8" r="1.55" fill="#000"/>
<circle cx="313.8" cy="405.8" r="1.55" fill="#000"/>
<circle cx="323.5" cy="411.2" r="1.55" fill="#000"/>
<circle cx="322.4" cy="404.7" r="1.55" fill="#000"/>
<circle cx="300.7" cy="399.3" r="1.55" fill="#000"/>
<circle cx="305.1" cy="403.6" r="1.55" fill="#000"/>
<circle cx="304.0" cy="378.7" r="1.55" fill="#000"/>
<circle cx="325.7" cy="396.0" r="1.55" fill="#000"/>
<circle cx="335.4" cy="389.5" r="1.55" fill="#000"/>
<circle cx="334.4" cy="381.9" r="1.55" fill="#000"/>
<circle cx="321.3" cy="381.9" r="1.55" fill="#000"/>
<circle cx="314.8" cy="375.4" r="1.55" fill="#000"/>
<circle cx="319.2" cy="374.3" r="1.55" fill="#000"/>
<polyline points="352.8,362.2 360.4,370.8 373.4,382.8 381.0,390.4 388.6,395.8 395.1,401.2 403.8,409.9 416.8,420.7 430.0,427.2" fill="none" stroke="#000" stroke-width="1.1" stroke-linejoin="round"/>
<polyline points="330.0,411.0 340.8,409.9 362.5,412.1 373.4,412.1 386.4,406.6 399.4,399.0 412.4,392.5" fill="none" stroke="#000" stroke-width="1.1" stroke-linejoin="round"/>
<polyline points="368.0,360.0 363.6,376.3 357.1,383.9 354.9,398.0 351.7,412.1 346.3,435.9" fill="none" stroke="#000" stroke-width="1.1" stroke-linejoin="round"/>
<polyline points="383.1,360.0 379.9,376.3 373.4,382.8 369.0,394.7 366.9,403.4 365.8,416.4 361.5,440.0" fill="none" stroke="#000" stroke-width="1.1" stroke-linejoin="round"/>
<polyline points="334.3,389.3 336.5,395.8 341.9,408.8 336.5,427.2 335.4,440.0" fill="none" stroke="#000" stroke-width="1.1" stroke-linejoin="round"/>
<polyline points="330.0,429.4 346.3,431.6 361.5,435.9 373.4,440.0" fill="none" stroke="#000" stroke-width="1.1" stroke-linejoin="round"/>
<polyline points="336.5,365.4 337.6,375.2 336.5,381.7" fill="none" stroke="#000" stroke-width="1.1" stroke-linejoin="round"/>
<polyline points="330.0,377.4 337.6,375.2 348.4,374.1 360.4,370.8" fill="none" stroke="#000" stroke-width="1.1" stroke-linejoin="round"/>
<polyline points="350.6,381.7 354.9,380.6 358.2,388.2 368.0,389.3" fill="none" stroke="#000" stroke-width="1.1" stroke-linejoin="round"/>
<polyline points="330.0,401.2 338.7,400.1 353.9,395.8 366.9,396.9" fill="none" stroke="#000" stroke-width="1.1" stroke-linejoin="round"/>
<polyline points="338.7,392.5 346.3,392.5 351.7,395.8" fill="none" stroke="#000" stroke-width="1.1" stroke-linejoin="round"/>
<polyline points="354.9,415.3 358.2,416.4 357.1,428.3 361.5,429.4" fill="none" stroke="#000" stroke-width="1.1" stroke-linejoin="round"/>
<polyline points="354.9,415.3 353.9,431.6" fill="none" stroke="#000" stroke-width="1.1" stroke-linejoin="round"/>
<polyline points="370.1,417.5 371.2,422.9 368.0,425.1 375.6,427.2 375.0,432.7" fill="none" stroke="#000" stroke-width="1.1" stroke-linejoin="round"/>
<polyline points="375.6,384.9 385.3,392.5 391.8,388.2" fill="none" stroke="#000" stroke-width="1.1" stroke-linejoin="round"/>
<polyline points="379.9,394.7 386.4,404.5 390.7,408.8" fill="none" stroke="#000" stroke-width="1.1" stroke-linejoin="round"/>
<polyline points="382.1,390.4 377.7,398.0 381.0,401.2 385.3,404.5" fill="none" stroke="#000" stroke-width="1.1" stroke-linejoin="round"/>
<polyline points="400.5,360.0 403.8,366.5 399.4,374.1 397.2,380.6" fill="none" stroke="#000" stroke-width="1.1" stroke-linejoin="round"/>
<polyline points="390.7,362.2 399.4,374.1" fill="none" stroke="#000" stroke-width="1.1" stroke-linejoin="round"/>
<polyline points="386.4,364.3 396.2,370.8" fill="none" stroke="#000" stroke-width="1.1" stroke-linejoin="round"/>
<polyline points="416.8,395.8 420.0,387.1 424.4,376.3 427.6,364.3" fill="none" stroke="#000" stroke-width="1.1" stroke-linejoin="round"/>
<polyline points="390.7,422.9 386.4,433.8 384.2,440.0" fill="none" stroke="#000" stroke-width="1.1" stroke-linejoin="round"/>
<circle cx="333.3" cy="379.5" r="1.55" fill="#000"/>
<circle cx="335.4" cy="381.7" r="1.55" fill="#000"/>
<circle cx="347.4" cy="367.6" r="1.55" fill="#000"/>
<circle cx="344.1" cy="367.6" r="1.55" fill="#000"/>
<circle cx="338.7" cy="392.5" r="1.55" fill="#000"/>
<circle cx="346.3" cy="392.5" r="1.55" fill="#000"/>
<circle cx="370.1" cy="417.5" r="1.55" fill="#000"/>
<circle cx="375.0" cy="432.7" r="1.55" fill="#000"/>
<circle cx="391.8" cy="388.2" r="1.55" fill="#000"/>
<circle cx="385.3" cy="404.5" r="1.55" fill="#000"/>
<circle cx="397.2" cy="380.6" r="1.55" fill="#000"/>
<circle cx="399.4" cy="398.0" r="1.55" fill="#000"/>
<circle cx="390.7" cy="408.8" r="1.55" fill="#000"/>
<circle cx="373.4" cy="382.8" r="1.55" fill="#000"/>
<circle cx="360.4" cy="370.8" r="1.55" fill="#000"/>
<circle cx="381.0" cy="390.4" r="1.55" fill="#000"/>
<polyline points="422.0,442.9 432.0,444.9 444.0,450.9 458.0,454.9 476.9,461.9" fill="none" stroke="#000" stroke-width="1.1" stroke-linejoin="round"/>
<polyline points="476.9,461.9 482.9,471.9 489.9,477.9 499.9,487.9" fill="none" stroke="#000" stroke-width="1.1" stroke-linejoin="round"/>
<polyline points="482.9,471.9 473.9,482.9" fill="none" stroke="#000" stroke-width="1.1" stroke-linejoin="round"/>
<polyline points="467.9,387.0 475.9,385.0" fill="none" stroke="#000" stroke-width="1.1" stroke-linejoin="round"/>
<polyline points="479.9,385.0 489.9,389.0 501.9,391.0 513.9,389.0 520.9,387.0 521.9,395.0 529.9,397.0 539.9,398.0" fill="none" stroke="#000" stroke-width="1.1" stroke-linejoin="round"/>
<polyline points="521.9,387.0 533.9,385.0" fill="none" stroke="#000" stroke-width="1.1" stroke-linejoin="round"/>
<polyline points="531.9,387.0 529.9,397.0" fill="none" stroke="#000" stroke-width="1.1" stroke-linejoin="round"/>
<polyline points="537.9,391.0 539.9,399.0" fill="none" stroke="#000" stroke-width="1.1" stroke-linejoin="round"/>
<polyline points="460.0,525.1 463.9,516.9 467.9,516.9 475.9,525.1" fill="none" stroke="#000" stroke-width="1.1" stroke-linejoin="round"/>
<circle cx="476.9" cy="461.9" r="1.55" fill="#000"/>
<circle cx="499.9" cy="487.9" r="1.55" fill="#000"/>
<circle cx="473.9" cy="482.9" r="1.55" fill="#000"/>
<circle cx="467.9" cy="387.0" r="1.55" fill="#000"/>
<circle cx="539.9" cy="398.0" r="1.55" fill="#000"/>
<circle cx="432.0" cy="444.9" r="1.55" fill="#000"/>
<circle cx="482.9" cy="471.9" r="1.55" fill="#000"/>
<circle cx="466.9" cy="516.9" r="1.55" fill="#000"/>
<polyline points="365.9,505.0 369.9,531.0 371.9,543.0 381.9,544.0 395.9,542.0 411.9,539.0 419.9,536.0 435.9,534.0 451.8,532.0 459.8,525.0 465.8,517.0 480.8,530.0" fill="none" stroke="#000" stroke-width="1.1" stroke-linejoin="round"/>
<polyline points="381.9,505.0 384.9,521.0 385.9,543.0" fill="none" stroke="#000" stroke-width="1.1" stroke-linejoin="round"/>
<polyline points="383.9,523.0 383.9,543.0" fill="none" stroke="#000" stroke-width="1.1" stroke-linejoin="round"/>
<polyline points="355.9,507.0 383.9,508.0" fill="none" stroke="#000" stroke-width="1.1" stroke-linejoin="round"/>
<polyline points="348.0,505.0 348.0,510.0" fill="none" stroke="#000" stroke-width="1.1" stroke-linejoin="round"/>
<polyline points="344.0,541.0 351.9,539.0 359.9,535.0 369.9,533.0" fill="none" stroke="#000" stroke-width="1.1" stroke-linejoin="round"/>
<polyline points="347.0,533.0 353.9,541.0" fill="none" stroke="#000" stroke-width="1.1" stroke-linejoin="round"/>
<polyline points="354.9,531.0 358.9,537.0" fill="none" stroke="#000" stroke-width="1.1" stroke-linejoin="round"/>
<polyline points="361.9,525.0 363.9,535.0" fill="none" stroke="#000" stroke-width="1.1" stroke-linejoin="round"/>
<polyline points="395.9,542.0 399.9,547.0 402.9,549.0" fill="none" stroke="#000" stroke-width="1.1" stroke-linejoin="round"/>
<polyline points="398.9,532.0 394.9,541.0" fill="none" stroke="#000" stroke-width="1.1" stroke-linejoin="round"/>
<polyline points="407.9,537.0 411.9,541.0 427.9,545.0 432.9,548.0" fill="none" stroke="#000" stroke-width="1.1" stroke-linejoin="round"/>
<polyline points="411.9,540.0 414.9,553.0 415.9,564.9 414.9,590.9" fill="none" stroke="#000" stroke-width="1.1" stroke-linejoin="round"/>
<polyline points="437.9,535.0 439.9,545.0 443.9,550.0" fill="none" stroke="#000" stroke-width="1.1" stroke-linejoin="round"/>
<polyline points="443.9,534.0 447.9,545.0" fill="none" stroke="#000" stroke-width="1.1" stroke-linejoin="round"/>
<polyline points="449.9,533.0 454.8,544.0" fill="none" stroke="#000" stroke-width="1.1" stroke-linejoin="round"/>
<circle cx="480.8" cy="530.0" r="1.55" fill="#000"/>
<circle cx="355.9" cy="507.0" r="1.55" fill="#000"/>
<circle cx="383.9" cy="508.0" r="1.55" fill="#000"/>
<circle cx="348.0" cy="510.0" r="1.55" fill="#000"/>
<circle cx="344.0" cy="541.0" r="1.55" fill="#000"/>
<circle cx="347.0" cy="533.0" r="1.55" fill="#000"/>
<circle cx="354.9" cy="531.0" r="1.55" fill="#000"/>
<circle cx="361.9" cy="525.0" r="1.55" fill="#000"/>
<circle cx="402.9" cy="549.0" r="1.55" fill="#000"/>
<circle cx="398.9" cy="532.0" r="1.55" fill="#000"/>
<circle cx="407.9" cy="537.0" r="1.55" fill="#000"/>
<circle cx="432.9" cy="548.0" r="1.55" fill="#000"/>
<circle cx="414.9" cy="590.9" r="1.55" fill="#000"/>
<circle cx="447.9" cy="545.0" r="1.55" fill="#000"/>
<circle cx="454.8" cy="544.0" r="1.55" fill="#000"/>
<circle cx="385.9" cy="531.0" r="1.55" fill="#000"/>
<circle cx="369.9" cy="509.0" r="1.55" fill="#000"/>
<circle cx="465.8" cy="517.0" r="1.55" fill="#000"/>
<polyline points="639.0,164.6 639.0,169.0 649.9,167.0 652.9,171.0" fill="none" stroke="#000" stroke-width="1.1" stroke-linejoin="round"/>
<polyline points="639.0,169.0 641.9,174.0" fill="none" stroke="#000" stroke-width="1.1" stroke-linejoin="round"/>
<polyline points="660.9,166.0 655.9,167.0 653.9,171.0" fill="none" stroke="#000" stroke-width="1.1" stroke-linejoin="round"/>
<polyline points="641.9,174.0 647.9,208.9 652.9,230.9" fill="none" stroke="#000" stroke-width="1.1" stroke-linejoin="round"/>
<polyline points="655.9,167.0 658.9,185.0 661.9,207.9" fill="none" stroke="#000" stroke-width="1.1" stroke-linejoin="round"/>
<polyline points="658.9,184.0 679.9,180.0" fill="none" stroke="#000" stroke-width="1.1" stroke-linejoin="round"/>
<polyline points="633.0,198.0 643.9,197.0" fill="none" stroke="#000" stroke-width="1.1" stroke-linejoin="round"/>
<polyline points="647.9,208.9 661.9,207.9 671.9,205.9 682.9,204.0 683.9,216.9 675.9,238.9 669.9,256.9 665.9,268.9" fill="none" stroke="#000" stroke-width="1.1" stroke-linejoin="round"/>
<polyline points="652.9,230.9 643.9,234.9 640.9,244.9 645.9,252.9 653.9,255.9 661.9,253.9 669.9,256.9" fill="none" stroke="#000" stroke-width="1.1" stroke-linejoin="round"/>
<polyline points="652.9,230.9 661.9,230.9 671.9,234.9 675.9,238.9" fill="none" stroke="#000" stroke-width="1.1" stroke-linejoin="round"/>
<polyline points="636.0,230.9 626.0,231.9 627.0,238.9 615.0,240.9 618.0,264.9 620.0,282.9" fill="none" stroke="#000" stroke-width="1.1" stroke-linejoin="round"/>
<polyline points="657.9,262.9 661.9,267.9" fill="none" stroke="#000" stroke-width="1.1" stroke-linejoin="round"/>
<polyline points="665.9,256.9 673.9,254.9 689.9,253.9 693.9,248.9 709.9,248.9 717.9,254.9" fill="none" stroke="#000" stroke-width="1.1" stroke-linejoin="round"/>
<polyline points="669.9,270.9 695.9,266.9 701.9,263.9" fill="none" stroke="#000" stroke-width="1.1" stroke-linejoin="round"/>
<polyline points="693.9,254.9 694.9,292.9" fill="none" stroke="#000" stroke-width="1.1" stroke-linejoin="round"/>
<polyline points="671.9,270.9 679.9,284.9 693.9,285.9" fill="none" stroke="#000" stroke-width="1.1" stroke-linejoin="round"/>
<polyline points="707.9,258.9 717.9,270.9 719.9,273.9" fill="none" stroke="#000" stroke-width="1.1" stroke-linejoin="round"/>
<polyline points="701.9,264.9 707.9,282.9 711.9,292.9" fill="none" stroke="#000" stroke-width="1.1" stroke-linejoin="round"/>
<polyline points="668.9,274.9 659.9,286.9 657.9,295.1" fill="none" stroke="#000" stroke-width="1.1" stroke-linejoin="round"/>
<polyline points="590.0,286.9 608.0,284.9 620.0,282.9 630.0,286.9 638.0,294.9" fill="none" stroke="#000" stroke-width="1.1" stroke-linejoin="round"/>
<polyline points="608.0,282.9 610.0,295.1" fill="none" stroke="#000" stroke-width="1.1" stroke-linejoin="round"/>
<polyline points="610.0,292.9 630.0,288.9" fill="none" stroke="#000" stroke-width="1.1" stroke-linejoin="round"/>
<polyline points="775.0,258.9 771.8,266.9 770.8,276.9 753.8,282.9 733.9,292.9 729.9,295.1" fill="none" stroke="#000" stroke-width="1.1" stroke-linejoin="round"/>
<circle cx="639.0" cy="164.6" r="1.55" fill="#000"/>
<circle cx="641.9" cy="174.0" r="1.55" fill="#000"/>
<circle cx="660.9" cy="166.0" r="1.55" fill="#000"/>
<circle cx="679.9" cy="180.0" r="1.55" fill="#000"/>
<circle cx="633.0" cy="198.0" r="1.55" fill="#000"/>
<circle cx="661.9" cy="207.9" r="1.55" fill="#000"/>
<circle cx="671.9" cy="205.9" r="1.55" fill="#000"/>
<circle cx="683.9" cy="216.9" r="1.55" fill="#000"/>
<circle cx="675.9" cy="238.9" r="1.55" fill="#000"/>
<circle cx="652.9" cy="230.9" r="1.55" fill="#000"/>
<circle cx="636.0" cy="230.9" r="1.55" fill="#000"/>
<circle cx="620.0" cy="282.9" r="1.55" fill="#000"/>
<circle cx="657.9" cy="262.9" r="1.55" fill="#000"/>
<circle cx="661.9" cy="267.9" r="1.55" fill="#000"/>
<circle cx="717.9" cy="254.9" r="1.55" fill="#000"/>
<circle cx="719.9" cy="273.9" r="1.55" fill="#000"/>
<circle cx="668.9" cy="274.9" r="1.55" fill="#000"/>
<circle cx="630.0" cy="288.9" r="1.55" fill="#000"/>
<circle cx="647.9" cy="208.9" r="1.55" fill="#000"/>
<circle cx="689.9" cy="253.9" r="1.55" fill="#000"/>
<polyline points="540.0,286.0 560.0,287.0 582.0,290.0 599.9,286.0 608.9,285.0 609.9,282.0 619.9,284.0 627.9,285.0 637.9,292.0 649.9,312.0 659.9,323.9 667.9,327.9 689.9,332.9 697.8,345.9 703.8,361.9 701.8,371.9 695.8,393.9" fill="none" stroke="#000" stroke-width="1.1" stroke-linejoin="round"/>
<polyline points="617.9,270.0 619.9,284.0" fill="none" stroke="#000" stroke-width="1.1" stroke-linejoin="round"/>
<polyline points="609.9,282.0 608.9,290.0 609.9,293.0 627.9,289.0" fill="none" stroke="#000" stroke-width="1.1" stroke-linejoin="round"/>
<polyline points="597.9,294.0 609.9,293.0" fill="none" stroke="#000" stroke-width="1.1" stroke-linejoin="round"/>
<polyline points="597.9,294.0 597.9,310.0 586.0,312.0 578.0,314.0 560.0,315.0 552.0,316.0 540.0,305.0" fill="none" stroke="#000" stroke-width="1.1" stroke-linejoin="round"/>
<polyline points="597.9,310.0 615.9,315.0 625.9,316.0 631.9,325.9 641.9,339.9 643.9,351.9 653.9,365.9 681.9,364.9 689.9,374.9 701.8,372.9 723.8,379.9" fill="none" stroke="#000" stroke-width="1.1" stroke-linejoin="round"/>
<polyline points="599.9,312.0 602.9,325.9 600.9,330.9" fill="none" stroke="#000" stroke-width="1.1" stroke-linejoin="round"/>
<polyline points="611.9,293.0 613.9,305.0 617.9,312.0 615.9,316.0 616.9,327.9" fill="none" stroke="#000" stroke-width="1.1" stroke-linejoin="round"/>
<polyline points="650.9,312.0 660.9,287.0 668.9,276.0 673.9,270.0" fill="none" stroke="#000" stroke-width="1.1" stroke-linejoin="round"/>
<polyline points="661.9,365.9 659.9,407.9" fill="none" stroke="#000" stroke-width="1.1" stroke-linejoin="round"/>
<polyline points="689.9,332.9 697.8,329.9 711.8,323.9 725.0,320.9" fill="none" stroke="#000" stroke-width="1.1" stroke-linejoin="round"/>
<polyline points="697.8,329.9 698.8,335.9" fill="none" stroke="#000" stroke-width="1.1" stroke-linejoin="round"/>
<polyline points="701.8,270.0 705.8,282.0 714.8,297.0 715.8,313.0 711.8,323.9" fill="none" stroke="#000" stroke-width="1.1" stroke-linejoin="round"/>
<polyline points="669.9,270.0 679.9,282.0 679.9,290.0 695.8,286.0 695.8,294.0" fill="none" stroke="#000" stroke-width="1.1" stroke-linejoin="round"/>
<polyline points="683.9,294.0 685.9,301.0" fill="none" stroke="#000" stroke-width="1.1" stroke-linejoin="round"/>
<polyline points="679.9,288.0 683.9,294.0 695.8,294.0" fill="none" stroke="#000" stroke-width="1.1" stroke-linejoin="round"/>
<polyline points="711.8,270.0 715.8,278.0 723.8,274.0" fill="none" stroke="#000" stroke-width="1.1" stroke-linejoin="round"/>
<polyline points="725.0,300.0 719.8,306.0 715.8,313.0" fill="none" stroke="#000" stroke-width="1.1" stroke-linejoin="round"/>
<circle cx="695.8" cy="393.9" r="1.55" fill="#000"/>
<circle cx="627.9" cy="289.0" r="1.55" fill="#000"/>
<circle cx="552.0" cy="316.0" r="1.55" fill="#000"/>
<circle cx="641.9" cy="339.9" r="1.55" fill="#000"/>
<circle cx="600.9" cy="330.9" r="1.55" fill="#000"/>
<circle cx="616.9" cy="327.9" r="1.55" fill="#000"/>
<circle cx="659.9" cy="407.9" r="1.55" fill="#000"/>
<circle cx="698.8" cy="335.9" r="1.55" fill="#000"/>
<circle cx="685.9" cy="301.0" r="1.55" fill="#000"/>
<circle cx="723.8" cy="379.9" r="1.55" fill="#000"/>
<circle cx="578.0" cy="314.0" r="1.55" fill="#000"/>
<circle cx="650.9" cy="312.0" r="1.55" fill="#000"/>
<circle cx="660.9" cy="287.0" r="1.55" fill="#000"/>
<circle cx="668.9" cy="276.0" r="1.55" fill="#000"/>
<circle cx="619.9" cy="284.0" r="1.55" fill="#000"/>
<circle cx="613.9" cy="305.0" r="1.55" fill="#000"/>
<polyline points="692.0,248.0 710.0,249.0 719.0,256.0 716.0,262.0 698.0,258.0" fill="none" stroke="#000" stroke-width="1.1" stroke-linejoin="round"/>
<polyline points="694.0,256.0 696.0,268.0 694.0,285.9 696.0,293.9" fill="none" stroke="#000" stroke-width="1.1" stroke-linejoin="round"/>
<polyline points="702.0,266.0 706.0,279.9 714.0,296.9 716.0,305.9 716.0,313.9 712.0,323.9" fill="none" stroke="#000" stroke-width="1.1" stroke-linejoin="round"/>
<polyline points="710.0,266.0 714.0,277.9 720.0,272.9" fill="none" stroke="#000" stroke-width="1.1" stroke-linejoin="round"/>
<polyline points="690.0,285.9 696.0,285.9" fill="none" stroke="#000" stroke-width="1.1" stroke-linejoin="round"/>
<polyline points="712.0,323.9 736.0,316.9 775.9,315.9 797.9,308.9 805.9,303.9 817.9,297.9 829.9,295.9 845.8,293.9 857.8,296.9 861.8,299.9" fill="none" stroke="#000" stroke-width="1.1" stroke-linejoin="round"/>
<polyline points="716.0,305.9 730.0,295.9 745.9,287.9 755.9,283.9 768.9,276.9 771.9,262.0 777.9,260.0" fill="none" stroke="#000" stroke-width="1.1" stroke-linejoin="round"/>
<polyline points="690.0,331.9 700.0,323.9 712.0,323.9" fill="none" stroke="#000" stroke-width="1.1" stroke-linejoin="round"/>
<polyline points="698.0,328.9 699.0,335.9" fill="none" stroke="#000" stroke-width="1.1" stroke-linejoin="round"/>
<polyline points="690.0,335.9 702.0,357.9" fill="none" stroke="#000" stroke-width="1.1" stroke-linejoin="round"/>
<polyline points="807.9,301.9 809.9,315.9 815.9,323.9 829.9,328.9" fill="none" stroke="#000" stroke-width="1.1" stroke-linejoin="round"/>
<polyline points="857.8,291.9 859.8,298.9 861.8,307.9 868.8,308.9" fill="none" stroke="#000" stroke-width="1.1" stroke-linejoin="round"/>
<polyline points="866.8,286.9 868.8,294.9 868.8,303.9" fill="none" stroke="#000" stroke-width="1.1" stroke-linejoin="round"/>
<polyline points="859.8,298.9 869.8,295.9" fill="none" stroke="#000" stroke-width="1.1" stroke-linejoin="round"/>
<circle cx="696.0" cy="293.9" r="1.55" fill="#000"/>
<circle cx="714.0" cy="296.9" r="1.55" fill="#000"/>
<circle cx="720.0" cy="272.9" r="1.55" fill="#000"/>
<circle cx="696.0" cy="285.9" r="1.55" fill="#000"/>
<circle cx="777.9" cy="260.0" r="1.55" fill="#000"/>
<circle cx="699.0" cy="335.9" r="1.55" fill="#000"/>
<circle cx="829.9" cy="328.9" r="1.55" fill="#000"/>
<circle cx="857.8" cy="291.9" r="1.55" fill="#000"/>
<circle cx="868.8" cy="308.9" r="1.55" fill="#000"/>
<circle cx="866.8" cy="286.9" r="1.55" fill="#000"/>
<circle cx="868.8" cy="303.9" r="1.55" fill="#000"/>
<circle cx="869.8" cy="295.9" r="1.55" fill="#000"/>
<circle cx="736.0" cy="316.9" r="1.55" fill="#000"/>
<circle cx="716.0" cy="313.9" r="1.55" fill="#000"/>
<circle cx="712.0" cy="323.9" r="1.55" fill="#000"/>
<circle cx="733.0" cy="293.9" r="1.55" fill="#000"/>
<polyline points="367.8,266.0 367.8,299.9 369.0,311.8 370.8,321.3 372.0,329.9" fill="none" stroke="#000" stroke-width="1.1" stroke-linejoin="round"/>
<polyline points="367.8,266.0 373.2,266.6 380.9,272.0" fill="none" stroke="#000" stroke-width="1.1" stroke-linejoin="round"/>
<polyline points="367.8,287.4 373.7,286.8" fill="none" stroke="#000" stroke-width="1.1" stroke-linejoin="round"/>
<polyline points="372.0,293.4 372.0,299.9 377.9,299.9 382.7,301.1 385.0,307.0 386.2,316.5 386.2,329.9" fill="none" stroke="#000" stroke-width="1.1" stroke-linejoin="round"/>
<polyline points="372.0,299.9 375.5,307.0 377.9,316.5 380.3,329.9" fill="none" stroke="#000" stroke-width="1.1" stroke-linejoin="round"/>
<polyline points="365.4,310.0 368.4,321.3" fill="none" stroke="#000" stroke-width="1.1" stroke-linejoin="round"/>
<polyline points="313.8,329.9 320.9,326.0 329.2,323.7 337.5,320.1 347.0,317.7 356.5,318.3 367.2,320.7 379.1,324.2 388.6,326.0 396.9,328.4 400.0,329.6" fill="none" stroke="#000" stroke-width="1.1" stroke-linejoin="round"/>
<polyline points="341.1,280.9 337.5,282.1 334.5,288.0 335.1,297.5 339.9,302.3" fill="none" stroke="#000" stroke-width="1.1" stroke-linejoin="round"/>
<polyline points="341.1,280.9 342.9,285.6 347.0,294.0 350.6,299.9 354.1,308.2 356.5,318.3" fill="none" stroke="#000" stroke-width="1.1" stroke-linejoin="round"/>
<polyline points="338.7,286.8 345.8,288.0 351.2,288.0" fill="none" stroke="#000" stroke-width="1.1" stroke-linejoin="round"/>
<polyline points="338.1,294.0 347.0,292.2 354.1,292.8" fill="none" stroke="#000" stroke-width="1.1" stroke-linejoin="round"/>
<polyline points="348.2,298.7 355.9,298.7" fill="none" stroke="#000" stroke-width="1.1" stroke-linejoin="round"/>
<polyline points="348.2,305.2 351.8,304.1 357.7,305.2" fill="none" stroke="#000" stroke-width="1.1" stroke-linejoin="round"/>
<polyline points="324.4,295.7 324.4,305.8 325.6,311.8 329.2,316.5" fill="none" stroke="#000" stroke-width="1.1" stroke-linejoin="round"/>
<polyline points="320.9,305.8 325.6,307.0" fill="none" stroke="#000" stroke-width="1.1" stroke-linejoin="round"/>
<polyline points="325.6,308.8 337.5,309.4 341.1,311.8 342.3,316.5 344.6,323.7" fill="none" stroke="#000" stroke-width="1.1" stroke-linejoin="round"/>
<polyline points="326.8,314.1 331.6,313.0" fill="none" stroke="#000" stroke-width="1.1" stroke-linejoin="round"/>
<polyline points="329.2,317.7 334.0,321.3" fill="none" stroke="#000" stroke-width="1.1" stroke-linejoin="round"/>
<polyline points="322.1,316.5 323.3,329.9" fill="none" stroke="#000" stroke-width="1.1" stroke-linejoin="round"/>
<polyline points="345.8,321.3 347.0,326.0 349.4,329.9" fill="none" stroke="#000" stroke-width="1.1" stroke-linejoin="round"/>
<polyline points="348.2,322.5 351.8,322.5" fill="none" stroke="#000" stroke-width="1.1" stroke-linejoin="round"/>
<polyline points="349.4,326.0 351.8,327.2" fill="none" stroke="#000" stroke-width="1.1" stroke-linejoin="round"/>
<polyline points="399.3,314.1 394.5,320.1 393.3,329.9" fill="none" stroke="#000" stroke-width="1.1" stroke-linejoin="round"/>
<circle cx="380.9" cy="272.0" r="1.55" fill="#000"/>
<circle cx="373.7" cy="286.8" r="1.55" fill="#000"/>
<circle cx="372.0" cy="293.4" r="1.55" fill="#000"/>
<circle cx="365.4" cy="310.0" r="1.55" fill="#000"/>
<circle cx="339.9" cy="302.3" r="1.55" fill="#000"/>
<circle cx="351.2" cy="288.0" r="1.55" fill="#000"/>
<circle cx="338.1" cy="294.0" r="1.55" fill="#000"/>
<circle cx="354.1" cy="292.8" r="1.55" fill="#000"/>
<circle cx="355.9" cy="298.7" r="1.55" fill="#000"/>
<circle cx="348.2" cy="305.2" r="1.55" fill="#000"/>
<circle cx="357.7" cy="305.2" r="1.55" fill="#000"/>
<circle cx="324.4" cy="295.7" r="1.55" fill="#000"/>
<circle cx="325.6" cy="307.0" r="1.55" fill="#000"/>
<circle cx="331.6" cy="313.0" r="1.55" fill="#000"/>
<circle cx="334.0" cy="321.3" r="1.55" fill="#000"/>
<circle cx="322.1" cy="316.5" r="1.55" fill="#000"/>
<circle cx="351.8" cy="322.5" r="1.55" fill="#000"/>
<circle cx="351.8" cy="327.2" r="1.55" fill="#000"/>
<circle cx="341.1" cy="280.9" r="1.55" fill="#000"/>
<circle cx="338.7" cy="286.8" r="1.55" fill="#000"/>
<circle cx="345.8" cy="288.0" r="1.55" fill="#000"/>
<circle cx="347.0" cy="292.2" r="1.55" fill="#000"/>
<circle cx="348.2" cy="298.7" r="1.55" fill="#000"/>
<circle cx="351.8" cy="304.1" r="1.55" fill="#000"/>
<circle cx="366.0" cy="320.7" r="1.55" fill="#000"/>
<circle cx="379.1" cy="324.2" r="1.55" fill="#000"/>
<circle cx="385.6" cy="324.8" r="1.55" fill="#000"/>
<polyline points="344.9,555.8 342.2,562.3 343.3,567.8 347.6,572.1 350.8,574.3" fill="none" stroke="#000" stroke-width="1.1" stroke-linejoin="round"/>
<polyline points="357.9,555.8 359.5,565.6" fill="none" stroke="#000" stroke-width="1.1" stroke-linejoin="round"/>
<polyline points="364.4,555.3 366.0,559.1 368.2,562.3" fill="none" stroke="#000" stroke-width="1.1" stroke-linejoin="round"/>
<polyline points="342.2,571.6 346.5,580.8 344.3,586.2 342.2,588.4" fill="none" stroke="#000" stroke-width="1.1" stroke-linejoin="round"/>
<polyline points="348.7,574.3 359.5,565.6 368.2,562.3 375.8,560.2 383.4,553.7" fill="none" stroke="#000" stroke-width="1.1" stroke-linejoin="round"/>
<polyline points="357.9,571.0 359.0,580.2" fill="none" stroke="#000" stroke-width="1.1" stroke-linejoin="round"/>
<polyline points="366.0,572.1 363.8,563.4" fill="none" stroke="#000" stroke-width="1.1" stroke-linejoin="round"/>
<polyline points="383.4,553.7 402.9,552.6 420.0,551.5" fill="none" stroke="#000" stroke-width="1.1" stroke-linejoin="round"/>
<polyline points="383.4,553.7 384.4,559.1 386.6,564.0 390.9,571.0 396.4,577.5 400.7,584.0 405.0,592.7 409.4,599.2" fill="none" stroke="#000" stroke-width="1.1" stroke-linejoin="round"/>
<polyline points="386.6,564.0 394.2,561.3 401.8,561.3" fill="none" stroke="#000" stroke-width="1.1" stroke-linejoin="round"/>
<polyline points="350.8,580.8 359.5,578.6 368.2,577.5 376.9,575.4 387.7,571.0 398.5,571.0" fill="none" stroke="#000" stroke-width="1.1" stroke-linejoin="round"/>
<polyline points="343.3,580.8 341.1,586.2 345.4,593.8 349.8,602.5 353.0,606.8 359.5,611.1 366.0,614.4 372.5,616.5 381.2,619.8 389.9,620.9" fill="none" stroke="#000" stroke-width="1.1" stroke-linejoin="round"/>
<polyline points="346.5,581.9 353.0,579.7 351.9,584.0 353.0,594.9 357.3,601.4 366.0,605.7 374.7,603.5 385.5,599.2 396.4,594.9 405.0,591.6" fill="none" stroke="#000" stroke-width="1.1" stroke-linejoin="round"/>
<polyline points="355.2,586.2 374.7,585.1" fill="none" stroke="#000" stroke-width="1.1" stroke-linejoin="round"/>
<polyline points="360.1,592.7 374.7,591.1" fill="none" stroke="#000" stroke-width="1.1" stroke-linejoin="round"/>
<polyline points="362.2,599.7 372.5,598.1" fill="none" stroke="#000" stroke-width="1.1" stroke-linejoin="round"/>
<polyline points="374.7,579.7 375.8,597.0 376.9,610.0 377.4,625.0" fill="none" stroke="#000" stroke-width="1.1" stroke-linejoin="round"/>
<polyline points="377.9,577.5 385.5,588.4 376.9,595.9" fill="none" stroke="#000" stroke-width="1.1" stroke-linejoin="round"/>
<polyline points="382.3,576.4 389.9,586.2 394.2,590.5 386.6,595.9" fill="none" stroke="#000" stroke-width="1.1" stroke-linejoin="round"/>
<polyline points="386.6,574.3 394.2,581.9 400.7,590.5" fill="none" stroke="#000" stroke-width="1.1" stroke-linejoin="round"/>
<polyline points="402.9,552.6 402.9,575.4 404.0,579.7 409.4,584.0" fill="none" stroke="#000" stroke-width="1.1" stroke-linejoin="round"/>
<polyline points="413.7,551.5 413.7,588.4 415.9,591.6" fill="none" stroke="#000" stroke-width="1.1" stroke-linejoin="round"/>
<polyline points="407.2,597.0 400.7,599.2 388.8,605.7 377.9,610.0" fill="none" stroke="#000" stroke-width="1.1" stroke-linejoin="round"/>
<polyline points="409.4,599.2 399.6,605.7 385.5,614.4" fill="none" stroke="#000" stroke-width="1.1" stroke-linejoin="round"/>
<polyline points="359.5,611.1 366.0,618.7 370.4,620.9" fill="none" stroke="#000" stroke-width="1.1" stroke-linejoin="round"/>
<polyline points="389.9,619.8 390.9,625.0" fill="none" stroke="#000" stroke-width="1.1" stroke-linejoin="round"/>
<circle cx="344.9" cy="555.8" r="1.55" fill="#000"/>
<circle cx="357.9" cy="555.8" r="1.55" fill="#000"/>
<circle cx="364.4" cy="555.3" r="1.55" fill="#000"/>
<circle cx="342.2" cy="571.6" r="1.55" fill="#000"/>
<circle cx="357.9" cy="571.0" r="1.55" fill="#000"/>
<circle cx="359.0" cy="580.2" r="1.55" fill="#000"/>
<circle cx="366.0" cy="572.1" r="1.55" fill="#000"/>
<circle cx="355.2" cy="586.2" r="1.55" fill="#000"/>
<circle cx="374.7" cy="585.1" r="1.55" fill="#000"/>
<circle cx="360.1" cy="592.7" r="1.55" fill="#000"/>
<circle cx="374.7" cy="591.1" r="1.55" fill="#000"/>
<circle cx="362.2" cy="599.7" r="1.55" fill="#000"/>
<circle cx="409.4" cy="584.0" r="1.55" fill="#000"/>
<circle cx="415.9" cy="591.6" r="1.55" fill="#000"/>
<circle cx="407.2" cy="597.0" r="1.55" fill="#000"/>
<circle cx="389.9" cy="619.8" r="1.55" fill="#000"/>
<circle cx="402.9" cy="552.6" r="1.55" fill="#000"/>
<circle cx="383.4" cy="553.7" r="1.55" fill="#000"/>
<circle cx="386.6" cy="564.0" r="1.55" fill="#000"/>
<circle cx="350.8" cy="574.3" r="1.55" fill="#000"/>
<circle cx="359.5" cy="565.6" r="1.55" fill="#000"/>
<circle cx="368.2" cy="562.3" r="1.55" fill="#000"/>
<circle cx="353.0" cy="579.7" r="1.55" fill="#000"/>
<circle cx="402.9" cy="575.4" r="1.55" fill="#000"/>
<polyline points="221.0,440.0 228.0,447.0 236.0,453.0 240.0,455.2" fill="none" stroke="#000" stroke-width="1.1" stroke-linejoin="round"/>
<polyline points="237.4,455.4 240.5,483.8 237.4,496.0 232.4,504.0" fill="none" stroke="#000" stroke-width="1.1" stroke-linejoin="round"/>
<polyline points="243.5,455.4 248.6,485.9 238.5,498.0" fill="none" stroke="#000" stroke-width="1.1" stroke-linejoin="round"/>
<circle cx="221.0" cy="440.0" r="1.55" fill="#000"/>
<circle cx="232.4" cy="504.0" r="1.55" fill="#000"/>
<polyline points="395.0,447.9 403.5,442.7 410.2,434.1 414.9,428.9 421.6,421.3 424.4,411.8 423.5,405.2 421.6,399.5 418.7,393.8 420.6,390.0" fill="none" stroke="#000" stroke-width="1.1" stroke-linejoin="round"/>
<polyline points="395.0,422.3 400.7,416.6 403.5,409.9 411.1,402.3 416.8,399.0 422.5,397.1" fill="none" stroke="#000" stroke-width="1.1" stroke-linejoin="round"/>
<polyline points="403.5,409.9 409.2,413.7 416.8,422.3" fill="none" stroke="#000" stroke-width="1.1" stroke-linejoin="round"/>
<polyline points="411.1,402.3 414.9,406.1 418.7,413.7" fill="none" stroke="#000" stroke-width="1.1" stroke-linejoin="round"/>
<polyline points="399.7,416.6 414.0,428.9 417.8,432.7" fill="none" stroke="#000" stroke-width="1.1" stroke-linejoin="round"/>
<polyline points="395.0,423.2 410.2,433.6 421.6,442.2 429.2,446.9 442.4,456.4" fill="none" stroke="#000" stroke-width="1.1" stroke-linejoin="round"/>
<polyline points="421.6,421.3 428.2,422.3 434.8,420.4 446.2,428.9 452.9,435.5 458.6,433.6" fill="none" stroke="#000" stroke-width="1.1" stroke-linejoin="round"/>
<polyline points="424.4,428.9 430.1,433.6 436.7,438.4 446.2,446.9" fill="none" stroke="#000" stroke-width="1.1" stroke-linejoin="round"/>
<polyline points="429.2,423.2 442.4,432.7 447.2,446.9 448.1,450.7 461.4,455.5 475.0,460.0" fill="none" stroke="#000" stroke-width="1.1" stroke-linejoin="round"/>
<polyline points="429.2,423.2 424.4,428.9" fill="none" stroke="#000" stroke-width="1.1" stroke-linejoin="round"/>
<polyline points="441.5,432.7 436.7,438.4" fill="none" stroke="#000" stroke-width="1.1" stroke-linejoin="round"/>
<polyline points="421.6,442.2 430.1,433.6" fill="none" stroke="#000" stroke-width="1.1" stroke-linejoin="round"/>
<polyline points="448.1,450.7 442.4,456.4" fill="none" stroke="#000" stroke-width="1.1" stroke-linejoin="round"/>
<polyline points="446.2,446.9 452.9,455.5" fill="none" stroke="#000" stroke-width="1.1" stroke-linejoin="round"/>
<polyline points="395.0,399.5 399.7,397.6" fill="none" stroke="#000" stroke-width="1.1" stroke-linejoin="round"/>
<polyline points="400.7,402.3 395.0,406.1" fill="none" stroke="#000" stroke-width="1.1" stroke-linejoin="round"/>
<polyline points="431.1,412.8 428.2,417.5" fill="none" stroke="#000" stroke-width="1.1" stroke-linejoin="round"/>
<polyline points="395.0,455.5 400.7,450.7 403.5,451.7" fill="none" stroke="#000" stroke-width="1.1" stroke-linejoin="round"/>
<circle cx="416.8" cy="422.3" r="1.55" fill="#000"/>
<circle cx="418.7" cy="413.7" r="1.55" fill="#000"/>
<circle cx="417.8" cy="432.7" r="1.55" fill="#000"/>
<circle cx="442.4" cy="456.4" r="1.55" fill="#000"/>
<circle cx="452.9" cy="435.5" r="1.55" fill="#000"/>
<circle cx="458.6" cy="433.6" r="1.55" fill="#000"/>
<circle cx="424.4" cy="428.9" r="1.55" fill="#000"/>
<circle cx="452.9" cy="455.5" r="1.55" fill="#000"/>
<circle cx="399.7" cy="397.6" r="1.55" fill="#000"/>
<circle cx="431.1" cy="412.8" r="1.55" fill="#000"/>
<circle cx="450.0" cy="444.1" r="1.55" fill="#000"/>
<circle cx="403.5" cy="451.7" r="1.55" fill="#000"/>
<circle cx="403.5" cy="442.7" r="1.55" fill="#000"/>
<circle cx="410.2" cy="434.1" r="1.55" fill="#000"/>
<circle cx="411.1" cy="402.3" r="1.55" fill="#000"/>
<circle cx="403.5" cy="409.9" r="1.55" fill="#000"/>
<circle cx="441.5" cy="432.7" r="1.55" fill="#000"/>
<circle cx="436.7" cy="438.4" r="1.55" fill="#000"/>
<circle cx="430.1" cy="433.6" r="1.55" fill="#000"/>
<circle cx="421.6" cy="442.2" r="1.55" fill="#000"/>
<circle cx="414.0" cy="428.9" r="1.55" fill="#000"/>
<circle cx="408.8" cy="413.7" r="1.55" fill="#000"/>
<polyline points="439.5,370.6 444.2,365.9 452.8,355.4 456.6,360.2 463.2,370.6 466.1,363.0 467.0,359.2" fill="none" stroke="#000" stroke-width="1.1" stroke-linejoin="round"/>
<polyline points="430.0,375.4 439.5,370.6 440.4,374.4 445.2,380.1 454.7,375.4 458.5,377.3 468.9,381.1 468.0,386.7" fill="none" stroke="#000" stroke-width="1.1" stroke-linejoin="round"/>
<polyline points="444.2,365.9 454.7,374.4 458.5,376.3" fill="none" stroke="#000" stroke-width="1.1" stroke-linejoin="round"/>
<polyline points="463.2,363.0 466.1,363.0" fill="none" stroke="#000" stroke-width="1.1" stroke-linejoin="round"/>
<polyline points="471.7,368.7 475.1,372.0 468.9,376.3 468.9,381.1" fill="none" stroke="#000" stroke-width="1.1" stroke-linejoin="round"/>
<polyline points="476.0,360.2 480.3,367.8 475.1,372.0" fill="none" stroke="#000" stroke-width="1.1" stroke-linejoin="round"/>
<polyline points="445.2,380.1 441.4,382.0" fill="none" stroke="#000" stroke-width="1.1" stroke-linejoin="round"/>
<polyline points="447.1,389.6 455.6,390.5 468.0,386.7 477.4,384.8 486.9,387.7 500.0,391.5" fill="none" stroke="#000" stroke-width="1.1" stroke-linejoin="round"/>
<polyline points="453.7,393.4 463.2,401.0" fill="none" stroke="#000" stroke-width="1.1" stroke-linejoin="round"/>
<polyline points="451.8,395.3 458.5,403.8" fill="none" stroke="#000" stroke-width="1.1" stroke-linejoin="round"/>
<polyline points="441.4,348.8 445.2,351.6 452.8,345.0" fill="none" stroke="#000" stroke-width="1.1" stroke-linejoin="round"/>
<polyline points="449.0,348.8 438.5,358.3 430.0,368.7" fill="none" stroke="#000" stroke-width="1.1" stroke-linejoin="round"/>
<polyline points="470.8,351.6 465.1,349.7 462.3,354.5" fill="none" stroke="#000" stroke-width="1.1" stroke-linejoin="round"/>
<circle cx="467.0" cy="359.2" r="1.55" fill="#000"/>
<circle cx="463.2" cy="363.0" r="1.55" fill="#000"/>
<circle cx="471.7" cy="368.7" r="1.55" fill="#000"/>
<circle cx="476.0" cy="360.2" r="1.55" fill="#000"/>
<circle cx="480.3" cy="367.8" r="1.55" fill="#000"/>
<circle cx="463.2" cy="401.0" r="1.55" fill="#000"/>
<circle cx="458.5" cy="403.8" r="1.55" fill="#000"/>
<circle cx="441.4" cy="348.8" r="1.55" fill="#000"/>
<circle cx="449.0" cy="348.8" r="1.55" fill="#000"/>
<circle cx="470.8" cy="351.6" r="1.55" fill="#000"/>
<circle cx="439.5" cy="370.6" r="1.55" fill="#000"/>
<circle cx="444.2" cy="365.9" r="1.55" fill="#000"/>
<circle cx="454.7" cy="374.4" r="1.55" fill="#000"/>
<circle cx="463.2" cy="370.6" r="1.55" fill="#000"/>
<circle cx="468.9" cy="381.1" r="1.55" fill="#000"/>
<circle cx="468.0" cy="386.7" r="1.55" fill="#000"/>
<circle cx="454.7" cy="390.5" r="1.55" fill="#000"/>
<defs><radialGradient id="gg" cx="0.5" cy="0.55" r="0.6"><stop offset="0" stop-color="#72c47a"/><stop offset="1" stop-color="#16802a"/></radialGradient><radialGradient id="rg" cx="0.5" cy="0.5" r="0.6"><stop offset="0" stop-color="#ff9c9c"/><stop offset="1" stop-color="#d82828"/></radialGradient></defs>
<polygon points="332.2,476.3 339.8,485.2 331.1,485.2" fill="url(#gg)" stroke="#1a6a24" stroke-width="0.6"/>
<polygon points="320.8,485.2 330.0,485.2 327.3,494.7" fill="url(#gg)" stroke="#1a6a24" stroke-width="0.6"/>
<polygon points="801.0,294.0 811.0,294.0 806.0,302.0" fill="url(#gg)" stroke="#1a6a24" stroke-width="0.6"/>
<polygon points="806.0,302.0 812.0,311.0 800.0,311.0" fill="url(#gg)" stroke="#1a6a24" stroke-width="0.6"/>
<polygon points="417.0,355.0 425.0,360.0 417.0,366.0" fill="url(#gg)" stroke="#1a6a24" stroke-width="0.6"/>
<polygon points="425.0,360.0 431.0,355.0 431.0,366.0" fill="url(#gg)" stroke="#1a6a24" stroke-width="0.6"/>
<polygon points="390.0,394.0 397.0,398.0 391.0,403.0" fill="url(#gg)" stroke="#1a6a24" stroke-width="0.6"/>
<polygon points="397.0,401.0 406.0,401.0 402.0,408.0" fill="url(#gg)" stroke="#1a6a24" stroke-width="0.6"/>
<polygon points="367.6,551.4 372.4,559.7 362.8,559.7" fill="url(#gg)" stroke="#1a6a24" stroke-width="0.6"/>
<polygon points="376.9,552.5 381.7,560.8 372.1,560.8" fill="url(#gg)" stroke="#1a6a24" stroke-width="0.6"/>
<polygon points="384.4,576.0 379.6,567.7 389.2,567.7" fill="url(#gg)" stroke="#1a6a24" stroke-width="0.6"/>
<polygon points="397.0,562.4 397.0,572.0 388.7,567.2" fill="url(#gg)" stroke="#1a6a24" stroke-width="0.6"/>
<polygon points="404.4,584.1 394.8,584.1 399.6,575.8" fill="url(#gg)" stroke="#1a6a24" stroke-width="0.6"/>
<polygon points="401.2,587.2 406.0,595.5 396.4,595.5" fill="url(#gg)" stroke="#1a6a24" stroke-width="0.6"/>
<polygon points="373.6,594.8 378.4,603.1 368.8,603.1" fill="url(#gg)" stroke="#1a6a24" stroke-width="0.6"/>
<polygon points="342.8,583.9 352.4,583.9 347.6,592.2" fill="url(#gg)" stroke="#1a6a24" stroke-width="0.6"/>
<polygon points="353.5,600.2 348.7,608.5 343.9,600.2" fill="url(#gg)" stroke="#1a6a24" stroke-width="0.6"/>
<polygon points="356.3,605.6 361.1,613.9 351.5,613.9" fill="url(#gg)" stroke="#1a6a24" stroke-width="0.6"/>
<polygon points="375.3,621.9 367.0,617.1 375.3,612.3" fill="url(#gg)" stroke="#1a6a24" stroke-width="0.6"/>
<polygon points="379.5,605.2 387.8,610.0 379.5,614.8" fill="url(#gg)" stroke="#1a6a24" stroke-width="0.6"/>
<polygon points="382.3,626.4 377.5,618.1 387.1,618.1" fill="url(#gg)" stroke="#1a6a24" stroke-width="0.6"/>
<polygon points="367.8,575.2 363.0,583.5 358.2,575.2" fill="url(#gg)" stroke="#1a6a24" stroke-width="0.6"/>
<polygon points="354.0,575.5 349.2,567.2 358.8,567.2" fill="url(#gg)" stroke="#1a6a24" stroke-width="0.6"/>
<polygon points="393.2,562.8 398.0,554.5 402.8,562.8" fill="url(#gg)" stroke="#1a6a24" stroke-width="0.6"/>
<polygon points="427.5,359.5 432.3,350.8 436.1,359.5" fill="url(#rg)" stroke="#b02020" stroke-width="0.6"/>
<polygon points="436.7,359.5 445.9,359.0 441.0,367.6" fill="url(#rg)" stroke="#b02020" stroke-width="0.6"/>
<polygon points="430.7,396.3 434.0,389.4 437.8,396.3" fill="url(#rg)" stroke="#b02020" stroke-width="0.6"/>
<polygon points="438.8,394.2 447.0,393.0 444.3,402.3" fill="url(#rg)" stroke="#b02020" stroke-width="0.6"/>
<polygon points="436.1,385.5 444.8,380.2 445.3,390" fill="#000"/>
<polygon points="519.4,278.8 518.8,289.8 531,287.3" fill="#000"/>
<rect x="422" y="396" width="14" height="5" fill="#3aaef0"/><rect x="422" y="396" width="14" height="1.2" fill="#fff"/><rect x="427" y="401" width="4.5" height="9.5" fill="#3aaef0"/>
<rect x="446" y="384" width="5" height="7" fill="#b8b0ff"/><rect x="445" y="386.5" width="7" height="1" fill="#fff"/>
<rect x="571" y="221" width="10" height="5" fill="#b8b0ff" stroke="#000080" stroke-width="0.5"/><path d="M570.5 227.5h10M570.5 227.5v4" stroke="#3080ff" stroke-width="1"/>
<text x="516" y="336.5" font-size="13.5" textLength="44" lengthAdjust="spacingAndGlyphs" fill="#008000">29 mwc</text>
<text x="780" y="266.3" font-size="13.5" textLength="44" lengthAdjust="spacingAndGlyphs" fill="#008000">59 mwc</text>
<text x="507" y="491.5" font-size="13.5" textLength="28" lengthAdjust="spacingAndGlyphs" fill="#008000">30 m</text>
<text x="254" y="79.5" font-weight="bold" font-size="14" letter-spacing="-0.5">Pressure [Pa]</text>
<rect x="199.5" y="103.5" width="191" height="132" fill="#fff" stroke="#a0a0a0"/>
<text x="266" y="120.5" text-anchor="end" font-weight="bold" font-size="14" letter-spacing="-0.6">591640.3</text>
<text x="336" y="120.5" text-anchor="end" font-weight="bold" font-size="14" letter-spacing="-0.6">-</text>
<rect x="346" y="109" width="40" height="12" fill="#0080ff"/>
<line x1="199" x2="391" y1="125.5" y2="125.5" stroke="#a0a0a0"/>
<text x="266" y="142.5" text-anchor="end" font-weight="bold" font-size="14" letter-spacing="-0.6">493572.2</text>
<text x="336" y="142.5" text-anchor="end" font-weight="bold" font-size="14" letter-spacing="-0.6">591640.3</text>
<rect x="346" y="131" width="40" height="12" fill="#008000"/>
<line x1="199" x2="391" y1="147.5" y2="147.5" stroke="#a0a0a0"/>
<text x="266" y="164.5" text-anchor="end" font-weight="bold" font-size="14" letter-spacing="-0.6">395504.2</text>
<text x="336" y="164.5" text-anchor="end" font-weight="bold" font-size="14" letter-spacing="-0.6">493572.2</text>
<rect x="346" y="153" width="40" height="12" fill="#80ff80"/>
<line x1="199" x2="391" y1="169.5" y2="169.5" stroke="#a0a0a0"/>
<text x="266" y="186.5" text-anchor="end" font-weight="bold" font-size="14" letter-spacing="-0.6">297436.1</text>
<text x="336" y="186.5" text-anchor="end" font-weight="bold" font-size="14" letter-spacing="-0.6">395504.2</text>
<rect x="346" y="175" width="40" height="12" fill="#ffff00"/>
<line x1="199" x2="391" y1="191.5" y2="191.5" stroke="#a0a0a0"/>
<text x="266" y="208.5" text-anchor="end" font-weight="bold" font-size="14" letter-spacing="-0.6">199368.1</text>
<text x="336" y="208.5" text-anchor="end" font-weight="bold" font-size="14" letter-spacing="-0.6">297436.1</text>
<rect x="346" y="197" width="40" height="12" fill="#ff8040"/>
<line x1="199" x2="391" y1="213.5" y2="213.5" stroke="#a0a0a0"/>
<text x="266" y="230.5" text-anchor="end" font-weight="bold" font-size="14" letter-spacing="-0.6">-</text>
<text x="336" y="230.5" text-anchor="end" font-weight="bold" font-size="14" letter-spacing="-0.6">199368.1</text>
<rect x="346" y="219" width="40" height="12" fill="#ff0000"/>
<line x1="270.5" x2="270.5" y1="103" y2="236" stroke="#a0a0a0"/>
<line x1="340.5" x2="340.5" y1="103" y2="236" stroke="#a0a0a0"/>
<circle cx="752.3" cy="603.6" r="55.5" fill="#fffff6" stroke="#00007a" stroke-width="5"/>
<text x="772.5" y="569.2" text-anchor="middle" font-size="13">1</text>
<text x="788.2" y="584.9" text-anchor="middle" font-size="13">2</text>
<text x="794.0" y="606.4" text-anchor="middle" font-size="13">3</text>
<text x="788.2" y="627.9" text-anchor="middle" font-size="13">4</text>
<text x="772.5" y="643.6" text-anchor="middle" font-size="13">5</text>
<text x="751.0" y="649.4" text-anchor="middle" font-size="13">6</text>
<text x="729.5" y="643.6" text-anchor="middle" font-size="13">7</text>
<text x="713.8" y="627.9" text-anchor="middle" font-size="13">8</text>
<text x="708.0" y="606.4" text-anchor="middle" font-size="13">9</text>
<text x="713.8" y="584.9" text-anchor="middle" font-size="13">10</text>
<text x="729.5" y="569.2" text-anchor="middle" font-size="13">11</text>
<text x="751.0" y="563.4" text-anchor="middle" font-size="13">12</text>
<path d="M752.8 603.6 L754.8 603.6 L753.9 559.6 Z" fill="#888" opacity="0.6"/>
<path d="M750.7 603.6 L753.9 603.6 L753.4 558.6 L751.2 558.6 Z" fill="#800000"/>
<line x1="754.3" y1="603.6" x2="754.3" y2="632.6" stroke="#888" stroke-width="2.5" opacity="0.6"/>
<line x1="752.3" y1="603.6" x2="752.3" y2="632.6" stroke="#ff0000" stroke-width="2.5"/>
<circle cx="752.3" cy="603.6" r="3" fill="#ff0000"/>
</svg>
</div>
</body></html>
